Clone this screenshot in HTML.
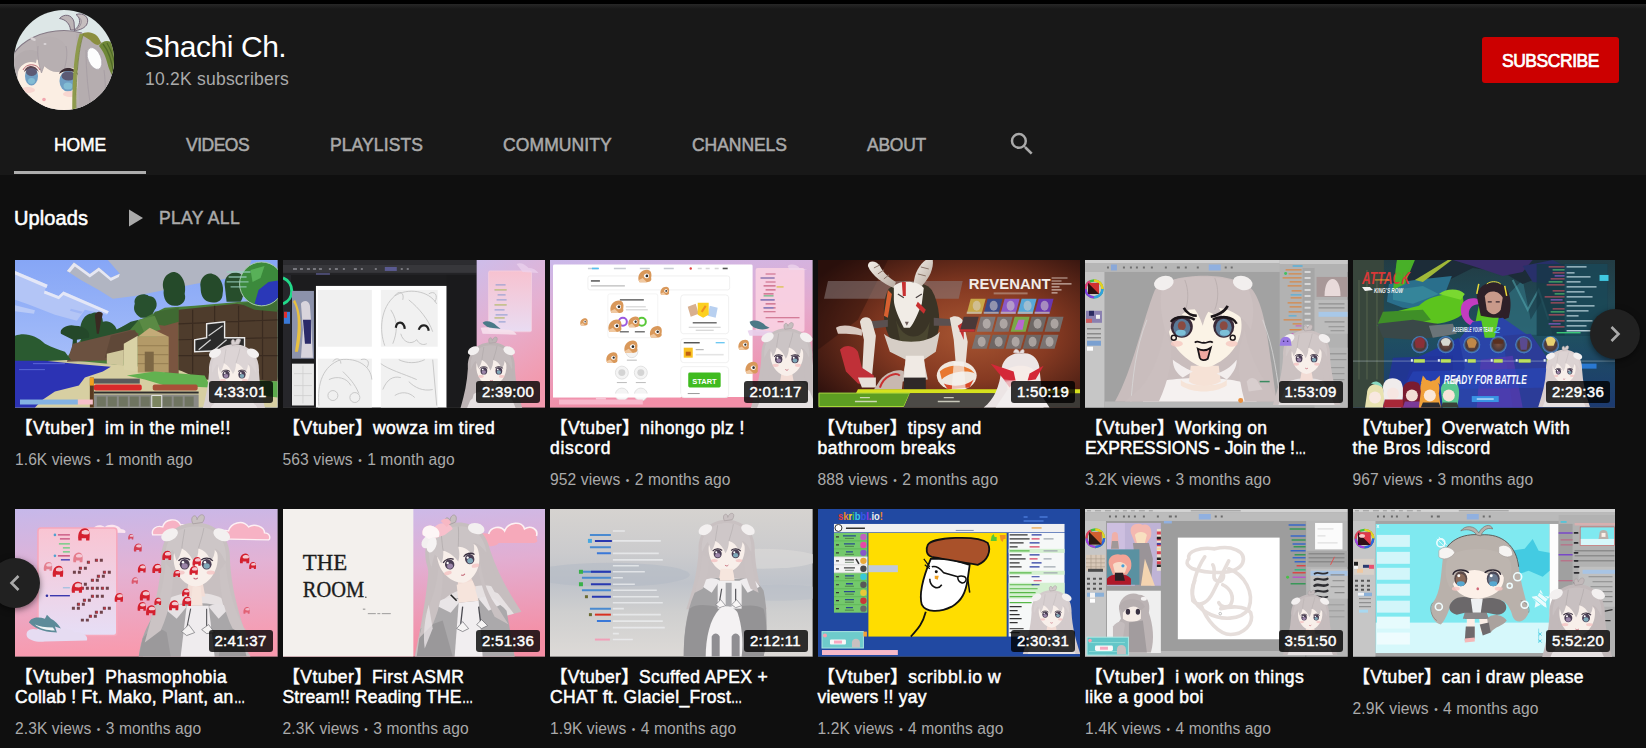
<!DOCTYPE html>
<html lang="en">
<head>
<meta charset="utf-8">
<title>Shachi Ch. - YouTube</title>
<style>
*{box-sizing:border-box;margin:0;padding:0}
html,body{width:1646px;height:748px;overflow:hidden;background:#0f0f0f;}
body{position:relative;font-family:"Liberation Sans","Noto Sans CJK JP",sans-serif;color:#fff;-webkit-font-smoothing:antialiased}
.abs{position:absolute}
#hdr{left:0;top:0;width:1646px;height:175px;background:#181818}
#topbar{left:0;top:0;width:1646px;height:4px;background:#000}
#topshadow{left:0;top:4px;width:1646px;height:5px;background:linear-gradient(#272727,#181818)}
#avatar{left:14px;top:10px;width:100px;height:100px;border-radius:50%;overflow:hidden}
#cname{left:144px;top:30px;font-size:30px;line-height:34px;white-space:nowrap;color:#fff;letter-spacing:-.45px}
#subs{left:145px;top:68px;font-size:17.5px;line-height:22px;white-space:nowrap;color:#aaa;letter-spacing:.23px}
#subbtn{left:1482px;top:37px;width:137px;height:46px;background:#cc0000;border-radius:3px;color:#fff;font-size:17.5px;text-align:center;line-height:48px;letter-spacing:-.45px;-webkit-text-stroke:.7px #fff}
.tab{top:134px;height:22px;line-height:22px;font-size:17.5px;color:#aaa;white-space:nowrap;-webkit-text-stroke:.5px currentColor}
.tab.sel{color:#fff}
#tabline{left:14px;top:171px;width:132px;height:3px;background:#adadad}
#uploads{left:14px;top:206px;font-size:20px;line-height:24px;white-space:nowrap;-webkit-text-stroke:.55px #fff;letter-spacing:.1px}
#playall{left:159px;top:207px;font-size:17.5px;line-height:22px;color:#aaa;white-space:nowrap;letter-spacing:.35px;-webkit-text-stroke:.5px #aaa}
.th{width:262.5px;height:147.5px;overflow:hidden;background:#444}
.th svg{display:block;width:262.5px;height:147.5px}
.dur{right:5px;bottom:5px;height:22px;width:64px;text-align:center;background:rgba(0,0,0,.8);border-radius:3px;font-size:15px;line-height:22px;color:#fff;letter-spacing:.3px;-webkit-text-stroke:.45px #fff}
.vt{width:262px;font-size:17.5px;line-height:20px;color:#fff;white-space:nowrap;-webkit-text-stroke:.5px #fff}
.vm{font-size:15.6px;line-height:20px;color:#aaa;white-space:nowrap}
.el{display:inline-block;width:11.2px;transform:scaleX(.64);transform-origin:0 50%;letter-spacing:0}
.bl{font-size:10px;vertical-align:1.5px;padding:0 .98px}
.nav{width:50px;height:50px;border-radius:50%;background:#212121;box-shadow:0 2px 6px rgba(0,0,0,.5)}
</style>
</head>
<body>
<svg width="0" height="0" style="position:absolute" aria-hidden="true">
<defs>
<g id="vtu">
<path d="M-25 28C-26 10 -14 0 0 0C14 0 26 10 25 28C26 46 30 62 36 80L-36 80C-30 62 -26 46 -25 28z" fill="currentColor"/>
<path d="M-2 1C-5 -5 1 -7 1 -2C3 -8 9 -6 5 0z" fill="currentColor" stroke="#a79ea0" stroke-width=".6"/>
<path d="M-20 56C-12 50 12 50 20 56L30 80L-30 80z" fill="#e6e1e2"/>
<path d="M-5 43L5 43L7 54L-7 54z" fill="#f3ddd6"/>
<path d="M-16 24C-16 14 16 14 16 24C17 36 9 46 0 47C-9 46 -17 36 -16 24z" fill="#f8efea"/>
<path d="M-22 30C-24 10 -12 3 0 3C12 3 24 10 22 30C20 24 17 20 14 19C14 23 13 26 11 28C9 23 6 20 2 19C2 23 1 27 -1 30C-3 25 -6 21 -10 19C-11 23 -12 26 -14 28C-15 24 -16 21 -17 20C-19 23 -21 26 -22 30z" fill="currentColor"/>
<path d="M-22 30C-24 10 -12 3 0 3C12 3 24 10 22 30C20 24 17 20 14 19C14 23 13 26 11 28C9 23 6 20 2 19C2 23 1 27 -1 30C-3 25 -6 21 -10 19C-11 23 -12 26 -14 28C-15 24 -16 21 -17 20C-19 23 -21 26 -22 30z" fill="#fff" opacity=".1"/>
<path d="M-8 5C-9 12 -10 16 -10 19M6 4C5 10 3 15 2 19" fill="none" stroke="#000" stroke-opacity=".1" stroke-width=".7"/>
<ellipse cx="-8" cy="30.500" rx="3.600" ry="3.900" fill="#4a3e54"/><ellipse cx="-8" cy="31.800" rx="2.300" ry="2" fill="#9a84a8"/><circle cx="-9.200" cy="29" r=".9" fill="#fff"/>
<ellipse cx="8" cy="30.500" rx="3.600" ry="3.900" fill="#4a3e54"/><ellipse cx="8" cy="31.800" rx="2.300" ry="2" fill="#7fa8b8"/><circle cx="6.800" cy="29" r=".9" fill="#fff"/>
<path d="M-12.500 28C-10.500 25.500 -6 25.500 -4 27.500M4 27.500C6 25.500 10.500 25.500 12.500 28" stroke="#3a3040" stroke-width="1" fill="none"/>
<ellipse cx="-11" cy="36.500" rx="3" ry="1.500" fill="#f4bcbc" opacity=".7"/><ellipse cx="11" cy="36.500" rx="3" ry="1.500" fill="#f4bcbc" opacity=".7"/>
<path d="M-1.500 40.500C-.5 41.500 .5 41.500 1.500 40.500" stroke="#c06070" stroke-width=".8" fill="none"/>
<ellipse cx="-19" cy="9" rx="6.500" ry="4.200" fill="#f3f0f0" transform="rotate(-28 -19 9)"/>
<ellipse cx="19" cy="9" rx="6.500" ry="4.200" fill="#f3f0f0" transform="rotate(28 19 9)"/>
<path d="M-22 28C-23 42 -24 54 -28 66L-20 60C-17 50 -17 38 -17 30z" fill="currentColor"/>
<path d="M22 28C23 42 24 54 28 66L20 60C17 50 17 38 17 30z" fill="currentColor"/>
</g>
</defs>
</svg>
<div id="hdr" class="abs"></div>
<div id="topshadow" class="abs"></div>
<div id="topbar" class="abs"></div>
<div id="avatar" class="abs"><svg width="100" height="100" viewBox="0 0 100 100">
<rect width="100" height="100" fill="#dde7e7"/>
<!-- ahoge -->
<path d="M45.500 8.500C50 3.500 58 4 60 12L60.500 20L56.500 20C56 14 52 9.500 45.500 8.500z" fill="#bcb4b6" stroke="#75697a" stroke-width="1"/>
<path d="M62 4.500C70 2 76.500 8 72.500 15C69.500 19 64 20.500 60 20.500C66 16 68 9 62 4.500z" fill="#c6bebf" stroke="#75697a" stroke-width="1"/>
<path d="M64 7C69 9 68 15 63 19" fill="none" stroke="#8a7e8c" stroke-width=".7"/>
<!-- hair back -->
<path d="M-2 46C8 30 28 20.500 50 20.500C72 20.500 92 30 102 50L102 102L-2 102z" fill="#b9b1b3"/>
<path d="M-2 46C8 30 28 20.500 50 20.500C58 20.500 64 22 68 23" fill="none" stroke="#857a86" stroke-width="1.100"/>
<!-- face -->
<path d="M4 62C8 50 22 46 28 52C30 56 40 62 46 62C52 58 58 56 64 60L62 100L10 100C4 90 2 76 4 62z" fill="#fbeee3"/>
<!-- bangs -->
<path d="M22 30C34 24 46 26 52 36C54 44 52 54 50 60C44 64 36 62 30 56L27.500 63C24 54 22 42 22 30z" fill="#b7afb1"/>
<path d="M0 50C6 40 16 38 24 42L22 53C14 50 8 54 2 62z" fill="#b4acae"/>
<path d="M24 36C23 46 25 56 27.500 63L30 56" fill="none" stroke="#a39aa0" stroke-width=".7"/>
<path d="M52 36C54 44 52 54 50 60" fill="none" stroke="#a39aa0" stroke-width=".7"/>
<!-- highlights -->
<ellipse cx="19" cy="29" rx="3" ry="1.500" fill="#d9d3d5" transform="rotate(25 19 29)"/>
<ellipse cx="31" cy="34" rx="1.500" ry="1" fill="#dcd6d8"/>
<!-- left eye -->
<ellipse cx="17.500" cy="66" rx="6.500" ry="9.500" fill="#6f9fc4"/>
<path d="M10 62C12 54 22 54 25 62C22 58 14 58 10 62z" fill="#5b4450"/>
<ellipse cx="17.500" cy="62" rx="5.500" ry="4" fill="#5c5a74"/>
<ellipse cx="17.500" cy="71" rx="3.500" ry="3" fill="#82bcd4"/>
<path d="M9 60C12 53 23 53 26 60" fill="none" stroke="#a84858" stroke-width=".8"/>
<!-- right eye -->
<ellipse cx="54" cy="71" rx="8.500" ry="10.500" fill="#6f9fc4"/>
<path d="M45 64C48 56 62 56 64 65C60 60 50 60 45 64z" fill="#3b2c34"/>
<ellipse cx="54.500" cy="66" rx="7" ry="4.500" fill="#5c5a74"/>
<ellipse cx="54" cy="76" rx="4.500" ry="3.500" fill="#82bcd4"/>
<!-- blush -->
<ellipse cx="14" cy="80" rx="7" ry="3" fill="#f8cfcb" opacity=".8"/>
<ellipse cx="56" cy="84" rx="7" ry="3" fill="#f8cfcb" opacity=".8"/>
<ellipse cx="30" cy="89.500" rx="1.800" ry="1.800" fill="#f2a8b0"/>
<!-- right side hair -->
<path d="M62 24C76 23 92 33 102 50L102 102L66 102C64 84 64 60 62 24z" fill="#b5adaf"/>
<path d="M72 40C72 60 74 84 78 102M90 60C92 76 92 90 90 102" fill="none" stroke="#a59ca2" stroke-width=".8"/>
<!-- green leaf -->
<path d="M67 24.500C73 20 84 22 87 33C84 37 80 34 76 30z" fill="#8b8e3e"/>
<path d="M85 36C90 28 100 30 102 40L102 72C98 66 95 60 93 52C91 44 88 40 85 36z" fill="#6f8838"/>
<path d="M89 34C94 40 98 50 100 66M93 33C97 40 100 48 101 56" fill="none" stroke="#4f6a28" stroke-width="1.200"/>
<!-- green stem -->
<path d="M67.500 24C62 40 60 70 60 100" fill="none" stroke="#8e9a4c" stroke-width="3.600"/>
<path d="M69.500 24C64 40 62 70 62 100" fill="none" stroke="#6f7c38" stroke-width=".7"/>
<!-- white clip -->
<ellipse cx="80.500" cy="48.500" rx="6.500" ry="11.500" fill="#fdfdfd" stroke="#a8a2aa" stroke-width=".7" transform="rotate(-22 80.500 48.500)"/>
</svg></div>
<div id="cname" class="abs">Shachi Ch.</div>
<div id="subs" class="abs">10.2K subscribers</div>
<div id="subbtn" class="abs">SUBSCRIBE</div>

<div class="abs tab sel" style="left:54px;letter-spacing:-0.1px">HOME</div>
<div class="abs tab" style="left:186px;letter-spacing:-0.5px">VIDEOS</div>
<div class="abs tab" style="left:330px;letter-spacing:0.1px">PLAYLISTS</div>
<div class="abs tab" style="left:503px;letter-spacing:0.1px">COMMUNITY</div>
<div class="abs tab" style="left:692px;letter-spacing:-0.05px">CHANNELS</div>
<div class="abs tab" style="left:867px;letter-spacing:-0.25px">ABOUT</div>
<svg class="abs" style="left:1007px;top:129px" width="30" height="30" viewBox="0 0 24 24"><path fill="#aaa" d="M15.5 14h-.79l-.28-.27A6.47 6.47 0 0 0 16 9.5 6.5 6.5 0 1 0 9.500 16c1.610 0 3.090-.59 4.230-1.570l.27.280v.79l5 4.990L20.490 19l-4.990-5zm-6 0C7.010 14 5 11.990 5 9.500S7.010 5 9.500 5 14 7.010 14 9.500 11.990 14 9.500 14z"/></svg>
<div id="tabline" class="abs"></div>

<div id="uploads" class="abs">Uploads</div>
<svg class="abs" style="left:128px;top:209px" width="16" height="18" viewBox="0 0 16 18"><path fill="#aaa" d="M1 0.500L15 9L1 17.500z"/></svg>
<div id="playall" class="abs">PLAY ALL</div>

<!-- ROW 1 -->
<div class="abs th" style="left:15px;top:260px" id="t1"><svg viewBox="0 0 263 148" preserveAspectRatio="none">
<defs><linearGradient id="sky1" x1="0" y1="0" x2="0" y2="1"><stop offset="0" stop-color="#86a6f6"/><stop offset=".7" stop-color="#a6bef9"/><stop offset="1" stop-color="#b8ccfa"/></linearGradient></defs>
<rect width="263" height="148" fill="url(#sky1)"/>
<!-- clouds -->
<path d="M93 0L237 0L232 14L205 20L180 24L150 30L120 36L98 39L84 30L66 20L52 11L59 2.500L75 14L84 7.400L96 17.800L105 13.900z" fill="#b1b5c2"/>
<path d="M52 11L59 2.500L75 14L84 7.400L96 17.800L105 13.900L104 17L96 21L84 11L75 17.500L60 6.500L55 12.500z" fill="#e6e7f2"/>
<path d="M0 11L32.700 24.800L29.700 30.700L43.600 36L48.500 31.700L94 51.500L92 55L70 50L62 61L40 55L13 44.500L0 40z" fill="#b3c5f6"/>
<path d="M0 11L32.700 24.800L31.500 28L0 14.500zM29.700 30.700L43.600 36L48.500 31.700L94 51.500L92.500 54L48.500 35L44 39.500L29 33.500z" fill="#e4e7f7"/>
<path d="M0 45.500L20 50.500L19 54L0 51.500z" fill="#b9caf7"/>
<path d="M56 49L68 52L66 54L55 51z" fill="#9fb6f5"/>
<!-- far trees on hill -->
<path d="M120 44C118 36 128 32 134 36C142 36 144 46 140 50L136 58L126 58C120 54 118 50 120 44z" fill="#28502e"/>
<path d="M149 30C146 20 152 12 160 12C168 14 172 24 170 34C172 40 168 46 160 46C152 46 148 38 149 30z" fill="#254a2a"/>
<path d="M186 28C184 18 192 12 198 14C206 16 210 26 208 34C208 42 200 44 194 42C188 40 186 34 186 28z" fill="#254a2a"/>
<path d="M210 24C210 14 220 10 226 14C232 20 230 36 226 42L212 42z" fill="#274e2c"/>
<!-- sand -->
<path d="M40 102L110 100L124 104L164 108L190 114L263 118L263 148L20 148z" fill="#d7cfa2"/>
<path d="M34 100L108 100L108 105L36 105z" fill="#c9c59c"/>
<!-- hill grass & dirt -->
<path d="M263 40L226 42L180 46L150 48L130 58L110 66L92 74L66 80L50 100L263 120z" fill="#4a7d3a"/>
<path d="M66 72C64 64 70 54 76 54C84 50 88 56 88 62C94 60 100 64 102 70L116 62L124 60L112 74L66 84z" fill="#28522e"/>
<path d="M46 74C44 68 54 64 60 66C70 66 76 72 74 78L62 80L62 100L56 100L58 80z" fill="#24482a"/>
<path d="M80 56C80 52 86 50 88 54L86 62L84 74L82 74z" fill="#3a2a22"/>
<path d="M58 84L116 70L124 74L110 100L52 102z" fill="#6b5140"/>
<path d="M136 66L164 62L164 118L150 114L144 80z" fill="#7a5540"/>
<path d="M96 76L120 70L128 84L110 96L90 98z" fill="#5c4636" opacity=".8"/>
<path d="M140 52L164 48L164 62L150 66L136 64z" fill="#3f6a32"/>
<path d="M124 60L140 56L146 70L130 74z" fill="#5a8a44"/>
<!-- dark plank wall -->
<path d="M164 50L222 44L263 50L263 122L186 120L164 110z" fill="#4e3c2c"/>
<path d="M164 64L263 60M164 80L263 78M164 96L263 96M178 50L178 114M200 46L200 118M224 46L224 120M248 48L248 120" stroke="#3a2b20" stroke-width="1.200" fill="none"/>
<path d="M192 64L210 62L210 78L224 78L230 78L230 90L180 92L180 80L192 78z" fill="#2a2a2a"/>
<path d="M192 64L210 62L210 78L230 78L230 90L180 92L180 80L192 78z" fill="none" stroke="#e8e8e8" stroke-width="1.400"/>
<path d="M194 76L208 66M184 90L196 80M200 90L212 80M214 90L226 80" stroke="#d0d0d0" stroke-width="1.200"/>
<path d="M226 44L263 38L263 52L240 50z" fill="#3f6e34"/>
<!-- house -->
<path d="M109 84L123 76L123 112L109 110z" fill="#d9d2a6"/>
<path d="M92 94L109 90L109 106L92 104z" fill="#cfc79c"/>
<rect x="123" y="77" width="31" height="36" fill="#b39a68"/>
<path d="M123 86L154 86M123 95L154 95M123 104L154 104" stroke="#8e774c" stroke-width=".8"/>
<rect x="130" y="92" width="9" height="20" fill="#7d6744"/>
<path d="M123 77L135 68L154 77z" fill="#c3ab78"/>
<!-- left forest -->
<path d="M0 76C10 72 22 76 30 84C38 88 44 90 50 92L56 100L0 103z" fill="#2a5a30"/>
<!-- grass patch -->
<path d="M112 116L140 112L190 116L196 128L150 126L130 120z" fill="#62b150"/>
<path d="M196 118L263 122L263 138L200 130z" fill="#5caa4c"/>
<!-- water -->
<path d="M0 101L30 101L60 104L96 107L88 112L70 118L64 126L40 132L28 140L20 148L0 148z" fill="#2c33b4"/>
<path d="M18 104L50 104M4 110L30 110" stroke="#5a66d8" stroke-width="1"/>
<!-- minimap -->
<circle cx="247" cy="24" r="22" fill="#3c8a3c"/>
<path d="M247 46A22 22 0 0 0 268 20L254 22L244 30L240 44z" fill="#2a38b8"/>
<path d="M236 10L250 6L246 18L238 22z" fill="#58b058"/>
<circle cx="247" cy="24" r="22" fill="none" stroke="#a8c8b0" stroke-width="1"/>
<path d="M212 12L236 12M214 17L232 17M212 22L234 22M216 27L232 27" stroke="#9ad0c0" stroke-width="1.400" opacity=".8"/>
<!-- hud -->
<rect x="79" y="135" width="105" height="13" fill="#8a8a86"/>
<path d="M82 137h9v10h-9zM93 137h9v10h-9zM104 137h9v10h-9zM115 137h9v10h-9zM126 137h9v10h-9zM148 137h9v10h-9zM159 137h9v10h-9zM170 137h9v10h-9z" fill="#6f7460"/>
<rect x="137" y="136" width="10" height="12" fill="#7c8560" stroke="#e4e4e4" stroke-width="1"/>
<rect x="79" y="125" width="48" height="6" rx="2" fill="#d82a2a"/>
<rect x="79" y="119" width="46" height="5" fill="#5a5a5a"/>
<rect x="138" y="125" width="45" height="6" rx="2" fill="#a85038"/>
<rect x="79" y="132" width="105" height="2" fill="#2e2e2e"/>
<rect x="75" y="118" width="4" height="30" fill="#5a3a20"/>
<rect x="75" y="118" width="4" height="8" fill="#f0a020"/>
<rect x="5" y="140" width="58" height="5" fill="#84b2e2"/>
<rect x="63" y="140" width="15" height="5" fill="#f6c0ca"/>
<!-- vtuber -->
<path d="M204 92C208 88 212 92 212 100L208 132L202 134C200 120 200 104 204 92z" fill="#262224"/>
<use href="#vtu" transform="translate(219.4 84.5) scale(1)" color="#d8d0d1"/>
</svg><div class="abs dur">4:33:01</div></div>

<div class="abs th" style="left:282.500px;top:260px" id="t2"><svg viewBox="0 0 263 148" preserveAspectRatio="none">
<defs><linearGradient id="cb2" x1="0" y1="0" x2="0" y2="1"><stop offset="0" stop-color="#f7c2d0"/><stop offset="1" stop-color="#e9dcf2"/></linearGradient><linearGradient id="pk2" x1="0" y1="0" x2="0.300" y2="1"><stop offset="0" stop-color="#cdbdea"/><stop offset=".5" stop-color="#e6b0d0"/><stop offset="1" stop-color="#f29aae"/></linearGradient></defs>
<rect width="263" height="148" fill="#1c1c1e"/>
<rect width="194" height="5" fill="#2c2c30"/>
<rect y="5" width="194" height="8" fill="#37373b"/>
<rect y="13" width="194" height="2" fill="#232326"/>
<rect x="102" y="7" width="12" height="4" fill="#5a5a90"/>
<path d="M10 9h4M17 9h3M24 9h3M30 9h3M36 9h3M46 9h2M52 9h3M60 9h2M71 9h3M78 9h2M92 9h2M118 9h2M124 9h2" stroke="#77777d" stroke-width="2"/>
<rect x="33" y="13" width="14" height="2" fill="#4a4a70"/>
<!-- left tool column -->
<rect x="0" y="15" width="8" height="133" fill="#26262a"/>
<path d="M0 18A14 14 0 0 1 0 44" fill="none" stroke="#22d98a" stroke-width="3"/>
<rect x="1" y="52" width="6" height="12" fill="#3a7ad8"/>
<rect x="1" y="52" width="3" height="6" fill="#e03030"/>
<!-- reference img -->
<rect x="9" y="31" width="22" height="68" fill="#8c92ab"/>
<path d="M18 44C20 40 26 40 27 46L28 60L30 98L18 98L20 70z" fill="#d8d4dc"/>
<path d="M20 60L28 60L28 84L22 84z" fill="#2a2a68"/>
<path d="M10 42C16 50 16 70 12 92L15 92C20 70 18 52 12 40z" fill="#e8c040"/>
<rect x="9" y="104" width="22" height="42" fill="#e9e9e9"/>
<path d="M11 114h18M11 126h18M11 136h18M20 106v38" stroke="#cfcfcf" stroke-width=".8"/>
<!-- canvas -->
<rect x="33" y="26" width="131" height="122" fill="#fff"/>
<rect x="35" y="30" width="54" height="57" fill="#f0f0f0"/>
<rect x="98" y="30" width="57" height="57" fill="#f1f1f1"/>
<rect x="35" y="99" width="54" height="49" fill="#f0f0f0"/>
<rect x="98" y="99" width="57" height="49" fill="#f1f1f1"/>
<g fill="none" stroke="#c4c4c4" stroke-width=".9">
<path d="M102 86C96 70 98 48 112 36C124 28 146 30 154 44M112 36C116 30 122 32 120 40M146 34C152 30 156 36 152 42M108 50C116 62 114 74 110 84M126 40C136 48 146 60 150 72M118 74C120 82 128 86 134 80C136 84 140 86 144 84"/>
<path d="M36 146C34 124 40 106 58 100C74 98 88 106 89 120M50 102C52 98 58 98 58 104M78 100C84 98 88 102 84 108M46 120C54 116 64 118 68 126M60 112C66 118 72 124 76 134"/>
<path d="M98 104C106 110 120 114 134 120M116 100C124 104 134 104 142 100M100 130C104 120 110 116 118 118M126 122C132 128 140 132 150 130M112 136C118 132 126 132 132 138M150 100L154 146"/>
<circle cx="50" cy="136" r="5"/><circle cx="72" cy="138" r="5"/>
</g>
<path d="M113 68C114 61 121 61 122 69" fill="none" stroke="#222" stroke-width="2.200"/>
<path d="M136 70C138 64 145 64 146 71" fill="none" stroke="#222" stroke-width="2.200"/>
<rect x="164" y="15" width="30" height="133" fill="#1a1a1c"/>
<!-- right panel -->
<rect x="194" y="0" width="69" height="148" fill="url(#pk2)"/>
<rect x="206" y="11" width="43" height="61" rx="1.500" fill="url(#cb2)" stroke="#f4cfe0" stroke-width=".8"/>
<path d="M213 25h10M212 30h12M215 35h8M214 40h10M212 45h12M212 50h10M213 55h12M212 58h10M216 62h7" stroke="#8a9ad0" stroke-width="1.300" opacity=".8"/>
<path d="M212 30h12M212 45h12M212 58h10" stroke="#d8d060" stroke-width="1.300" opacity=".8"/>
<path d="M234 4C238 2 242 4 246 8C250 8 254 10 256 13L240 12z" fill="#ecd3ee" opacity=".7"/>
<path d="M200 63C204 60 210 62 214 66L218 69L212 69C208 69 203 67 200 63z" fill="#4a7a88"/>
<path d="M198 68C206 66 216 70 226 70C230 70 234 74 234 75L200 74z" fill="#f6e0ec" opacity=".9"/>
<!-- vtuber -->
<use href="#vtu" transform="translate(208.75 82.6) scale(0.94)" color="#bdb4b5"/>
</svg><div class="abs dur">2:39:00</div></div>

<div class="abs th" style="left:550px;top:260px" id="t3"><svg viewBox="0 0 263 148" preserveAspectRatio="none">
<defs><linearGradient id="pk3" x1="0" y1="0" x2="0.200" y2="1"><stop offset="0" stop-color="#cbb9ea"/><stop offset=".5" stop-color="#e5a9cc"/><stop offset="1" stop-color="#f28fa8"/></linearGradient>
<g id="em3"><path d="M-6 4C-7 -2 -3 -6 2 -6C6 -6 7 -2 6 2C7 4 5 6 2 6L-5 6z" fill="#d9985a"/><path d="M-1 0C0 -3 4 -3 4 0C4 3 0 3 -1 0z" fill="#fff"/><circle cx="2" cy="0" r="1.300" fill="#2a2a2a"/><path d="M-6 4L-2 2L2 6L-5 6z" fill="#f0c8a0"/></g></defs>
<rect width="263" height="148" fill="url(#pk3)"/>
<rect x="3" y="4.400" width="200" height="133" rx="1.500" fill="#fff"/>
<path d="M38 8.500h10M64 8.500h12M90 8.500h10M114 8.500h10" stroke="#c8ccd4" stroke-width="1.600"/>
<path d="M42 8.500h7" stroke="#58c0f0" stroke-width="1.600"/>
<circle cx="141" cy="8.500" r="1.200" fill="#e04040"/><path d="M148 8.500h4M156 8.500h4M165 8.500h4" stroke="#d8d8d8" stroke-width="1.600"/><path d="M173 8.500h5" stroke="#555" stroke-width="1.600"/>
<rect x="38" y="16" width="142" height="14" rx="2" fill="#fff" stroke="#ececec" stroke-width=".8"/>
<path d="M41 21h9" stroke="#555" stroke-width="1.500"/><path d="M41 26h34" stroke="#bbb" stroke-width="1.200"/>
<rect x="58" y="34" width="50" height="44" rx="2" fill="#fff" stroke="#f0f0f0" stroke-width=".8"/>
<path d="M70 40h24" stroke="#666" stroke-width="1.500"/><path d="M76 47h20M76 50h22" stroke="#ccc" stroke-width="1"/>
<path d="M70 72h9M85 72h10" stroke="#777" stroke-width="1.300"/>
<circle cx="73" cy="62" r="4" fill="none" stroke="#9a58e0" stroke-width="2"/>
<circle cx="92" cy="62" r="4" fill="none" stroke="#58c838" stroke-width="2"/>
<!-- right cards -->
<rect x="131" y="35" width="48" height="39" rx="3" fill="#fff" stroke="#eee" stroke-width=".9"/>
<path d="M138 47l8 -3l3 10l-8 3z" fill="#d8b090"/><path d="M160 46l8 2l-2 10l-8 -2z" fill="#b8d0f0"/>
<path d="M148 43h11v12l-5.500 3l-5.500 -3z" fill="#fcd020"/><path d="M152 52l4 -6" stroke="#f09020" stroke-width="2"/>
<path d="M143 63h24" stroke="#666" stroke-width="1.400"/><path d="M139 67.500h32M146 70.500h18" stroke="#ccc" stroke-width="1"/>
<rect x="131" y="79" width="48" height="24" rx="3" fill="#fff" stroke="#eee" stroke-width=".9"/>
<path d="M134 83h16" stroke="#555" stroke-width="1.500"/><path d="M166 83h9" stroke="#58c0f0" stroke-width="1.200"/>
<rect x="134" y="88" width="9" height="10" fill="#f8c020"/><rect x="136" y="92" width="5" height="4" fill="#c06010"/>
<path d="M146 90h8" stroke="#aaa" stroke-width="1"/><path d="M146 95h28" stroke="#e4e4e4" stroke-width="1.600"/>
<rect x="131" y="107" width="48" height="31" rx="3" fill="#fff" stroke="#eee" stroke-width=".9"/>
<rect x="138.500" y="113" width="32.500" height="15" rx="1.500" fill="#3fbb1f"/>
<text x="154.800" y="124" font-family="Liberation Sans,sans-serif" font-weight="bold" font-size="7.500" fill="#fff" text-anchor="middle">START</text>
<path d="M138 134h12" stroke="#999" stroke-width="1"/>
<!-- lesson circles -->
<g fill="#f4f4f4" stroke="#dcdcdc" stroke-width=".8"><circle cx="72" cy="113" r="6.500"/><circle cx="91" cy="113" r="6.500"/><circle cx="72" cy="135" r="6.500"/><circle cx="91" cy="135" r="6.500"/><circle cx="82" cy="92" r="6"/></g>
<g fill="#d4d4d4"><circle cx="72" cy="113" r="3.500"/><circle cx="91" cy="113" r="3.500"/></g>
<path d="M67 123h10M86 123h10M77 100.500h10" stroke="#bbb" stroke-width="1"/>
<rect x="3" y="134" width="128" height="4" fill="#fff"/>
<!-- emotes -->
<use href="#em3" transform="translate(95 16) scale(1.050)"/>
<use href="#em3" transform="translate(115 31) scale(.7)"/>
<use href="#em3" transform="translate(67 47) scale(1.050)"/>
<use href="#em3" transform="translate(34 62) scale(.6)"/>
<use href="#em3" transform="translate(65 66) scale(1.050)"/>
<use href="#em3" transform="translate(84 62) scale(.9)"/>
<use href="#em3" transform="translate(106 72) scale(.95)"/>
<use href="#em3" transform="translate(81 87) scale(1.050)"/>
<use href="#em3" transform="translate(62 98) scale(.9)"/>
<use href="#em3" transform="translate(194 85) scale(.85)"/>
<use href="#em3" transform="translate(202 108) scale(1)"/>
<!-- chat panel -->
<rect x="206" y="8" width="49" height="64" rx="2" fill="#f9d3e2" opacity=".9"/>
<path d="M216 14h10M211 18h14M216 22h10M214 26h12M216 30h10M214 34h10M211 40h14M216 44h10M214 48h12M214 52h12M216 58h34M228 62h6" stroke="#c05070" stroke-width="1.100" opacity=".85"/>
<path d="M211 18h14M211 40h14M214 48h10" stroke="#7080c8" stroke-width="1.100"/>
<path d="M227 27h7" stroke="#d8c040" stroke-width="1.200"/><path d="M214 36h10" stroke="#58b878" stroke-width="1.100"/>
<path d="M238 6C242 3 248 5 250 8L258 10L240 10z" fill="#f0d8ee" opacity=".7"/>
<!-- orca -->
<path d="M200 62C205 59 212 61 216 66L220 68C216 70 212 70 208 69C204 68 201 66 200 62z" fill="#4c7886"/>
<path d="M198 71C206 68 218 72 228 72L232 76L200 76z" fill="#e8d0ec" opacity=".9"/>
<!-- vtuber -->
<use href="#vtu" transform="translate(237.3 68.5) scale(1.02)" color="#c6bebf"/>
<!-- bottom bar -->
<rect x="9" y="140" width="84" height="5" fill="#f8b8cc"/>
<rect x="46" y="138.500" width="10" height="1.500" fill="#f8c8d8"/>
</svg><div class="abs dur">2:01:17</div></div>

<div class="abs th" style="left:817.500px;top:260px" id="t4"><svg viewBox="0 0 263 148" preserveAspectRatio="none">
<defs><radialGradient id="bg4" cx=".58" cy=".5" r=".7"><stop offset="0" stop-color="#a85632"/><stop offset=".45" stop-color="#863a22"/><stop offset="1" stop-color="#2e110d"/></radialGradient>
<linearGradient id="sk4" x1="0" y1="0" x2="1" y2="1"><stop offset="0" stop-color="#f4efe8"/><stop offset="1" stop-color="#b8aaa0"/></linearGradient></defs>
<rect width="263" height="148" fill="url(#bg4)"/>
<path d="M0 0L70 0L40 60L0 90z" fill="#200c0a" opacity=".35"/>
<path d="M10 21L145 21L141 39L6 39z" fill="#8a7c7c" opacity=".55"/>
<!-- fur -->
<path d="M70 30C76 22 104 18 114 30C122 44 124 66 118 80C110 92 84 92 74 82C64 66 64 44 70 30z" fill="#3a3426"/>
<path d="M78 60C84 80 104 84 112 62L108 88L84 90z" fill="#4a4630"/>
<!-- horns -->
<path d="M76 28C66 24 54 16 50 6C50 0 58 0 62 6C66 14 72 18 78 22z" fill="url(#sk4)"/>
<path d="M96 24C96 14 102 4 108 0L115 0C116 8 112 18 104 26z" fill="url(#sk4)"/>
<path d="M56 8L62 5M60 14L66 10M66 19L71 15M100 14L108 16M103 7L111 9" stroke="#8a7468" stroke-width="1"/>
<!-- skull -->
<path d="M76 26C82 20 100 20 106 28L104 44C100 54 96 64 92 68L86 68C82 60 76 48 76 40z" fill="#f1ece6"/>
<path d="M84 22L88 22L88 36L85 36z" fill="#c83030"/>
<path d="M100 42L108 50L106 54L98 46z" fill="#c83030"/>
<path d="M80 34L86 38M98 38L104 34" stroke="#4a4040" stroke-width="1.200"/>
<path d="M87 62L91 62L89 66z" fill="#6a5a58"/>
<path d="M70 30L66 56L70 58L74 34z" fill="#d86030"/>
<!-- shoulders bar -->
<path d="M46 62L70 60L70 67L46 70z" fill="#5a5050"/>
<path d="M116 58L140 60L140 66L116 66z" fill="#5a5050"/>
<!-- left arm -->
<path d="M42 62C44 56 52 56 54 62L58 76L54 118L44 118L46 80z" fill="#e6ded6"/>
<path d="M18 68C24 64 36 66 44 70L44 76C36 74 26 74 20 74z" fill="#d8c8c0"/>
<path d="M22 90C28 84 36 86 40 92L44 108L56 116L56 126L40 124L28 112z" fill="#c03038"/>
<path d="M40 118L58 118L58 128L44 128z" fill="#e8e0d8"/>
<!-- right arm -->
<path d="M132 58C138 54 146 58 146 64L150 82L148 104L138 104L136 80z" fill="#e8e0d8"/>
<path d="M140 66L146 62L146 80z" fill="#c83030"/>
<!-- torso -->
<path d="M66 74C76 84 110 86 122 72L118 92L106 100L110 120L84 122L88 100L72 92z" fill="#d6cec6"/>
<path d="M88 96L106 96L108 118L86 120z" fill="#f0eae4"/>
<path d="M60 124C66 112 82 108 86 112L84 130L56 130z" fill="#c8b8b0"/>
<path d="M62 128C66 116 78 112 82 116" fill="none" stroke="#c83030" stroke-width="2"/>
<rect x="86" y="118" width="22" height="12" fill="#2e2828"/>
<!-- orb -->
<ellipse cx="139" cy="116" rx="20" ry="15" fill="#efe7df"/>
<path d="M122 112C130 104 150 104 157 114C150 110 132 112 124 120z" fill="#e87830"/>
<path d="M126 124C136 128 150 126 156 120L152 128L130 130z" fill="#d84828"/>
<path d="M136 102L146 102L148 130L134 130z" fill="#f6f2ee" opacity=".7"/>
<!-- title -->
<text x="151" y="29.300" font-family="Liberation Sans,sans-serif" font-weight="bold" font-size="15.400" fill="#f2ece8" textLength="82" lengthAdjust="spacingAndGlyphs">REVENANT</text>
<rect x="176" y="32.500" width="34" height="2" fill="#b08878" opacity=".8"/>
<path d="M234 18h16M234 21h10M234 24h20M234 27h8M234 30h10M234 33h6" stroke="#e8d8d0" stroke-width="1.100" opacity=".8"/>
<!-- grid -->
<g>
<path d="M153 39L168 39L164 54L149 54z" fill="#c8a848"/><path d="M170 39L185 39L181 54L166 54z" fill="#3a4a88"/><path d="M187 39L202 39L198 54L183 54z" fill="#8a58c8"/><path d="M204 39L219 39L215 54L200 54z" fill="#58a8d8"/><path d="M221 39L236 39L232 54L217 54z" fill="#6a38b0"/>
<path d="M146 57L161 57L157 72L142 72z" fill="#4a3838"/>
<path d="M163 57L178 57L174 72L159 72z" fill="#807878"/><path d="M180 57L195 57L191 72L176 72z" fill="#7a7272"/><path d="M197 57L212 57L208 72L193 72z" fill="#7aa848"/><path d="M214 57L229 57L225 72L210 72z" fill="#6e6866"/><path d="M231 57L246 57L242 72L227 72z" fill="#746e6c"/>
<path d="M158 75L173 75L169 89L154 89z" fill="#7a7270"/><path d="M175 75L190 75L186 89L171 89z" fill="#6e6664"/><path d="M192 75L207 75L203 89L188 89z" fill="#7a7270"/><path d="M209 75L224 75L220 89L205 89z" fill="#6e6664"/><path d="M226 75L241 75L237 89L222 89z" fill="#7a7270"/>
<path d="M201 60L207 60L205 70L197 70z" fill="#b868d0"/>
<path d="M149 52L164 52L163.500 54L149 54zM166 52L181 52L181 54L166 54zM183 52L198 52L198 54L183 54zM200 52L215 52L215 54L200 54zM217 52L232 52L232 54L217 54z" fill="#c8b8b0" opacity=".8"/>
<path d="M142 69.500L157 69.500L157 72L142 72z" fill="#c83030"/>
<g fill="#d8d0cc" opacity=".55"><ellipse cx="159" cy="46" rx="4" ry="5"/><ellipse cx="176" cy="46" rx="4" ry="5"/><ellipse cx="193" cy="46" rx="4" ry="5"/><ellipse cx="210" cy="46" rx="4" ry="5"/><ellipse cx="227" cy="46" rx="4" ry="5"/><ellipse cx="169" cy="64" rx="4" ry="5"/><ellipse cx="186" cy="64" rx="4" ry="5"/><ellipse cx="220" cy="64" rx="4" ry="5"/><ellipse cx="237" cy="64" rx="4" ry="5"/><ellipse cx="164" cy="82" rx="4" ry="5"/><ellipse cx="181" cy="82" rx="4" ry="5"/><ellipse cx="198" cy="82" rx="4" ry="5"/><ellipse cx="215" cy="82" rx="4" ry="5"/><ellipse cx="232" cy="82" rx="4" ry="5"/></g>
</g>
<!-- bottom bar -->
<rect x="0" y="133" width="263" height="15" fill="#3c3a36"/>
<path d="M40 129.600L263 129.600L263 133.600L38 133.600z" fill="#d6e21e"/>
<path d="M1 133.600L92 133.600L86 147L1 147z" fill="#5d9d22"/>
<path d="M1 133.600L92 133.600L86 147L1 147z" fill="none" stroke="#a6d838" stroke-width="1"/>
<path d="M92 133.600L176 133.600L176 148L86 148z" fill="#4c4a46"/>
<path d="M42 138h10M37 142h22M126 138h10M120 142h22" stroke="#e8e8d8" stroke-width="1.300" opacity=".8"/>
<!-- vtuber -->
<path d="M184 108C186 98 196 92 204 94C214 92 222 100 222 110L226 148L166 148C176 140 182 128 184 108z" fill="#ece5e5"/>
<path d="M196 93C196 89 200 88 202 93C204 88 208 89 206 94z" fill="#e8e0e0" stroke="#c8b8b8" stroke-width=".6"/>
<path d="M188 112C194 104 212 104 218 112L218 130L190 130z" fill="#f6ece8"/>
<path d="M173 104L196 112L198 121L188 122z" fill="#d42838"/>
<path d="M226 106L212 114L210 121L218 120z" fill="#d42838"/>
<path d="M186 120L198 121L192 128z" fill="#e8a0a8" opacity=".7"/>
<path d="M190 130L220 130L232 148L178 148z" fill="#f2eeee"/>
</svg><div class="abs dur">1:50:19</div></div>

<div class="abs th" style="left:1085px;top:260px" id="t5"><svg viewBox="0 0 263 148" preserveAspectRatio="none">
<rect width="263" height="148" fill="#a2a2a2"/>
<rect width="263" height="3.500" fill="#d0d0d0"/>
<rect y="3.500" width="263" height="8.500" fill="#b6b6b6"/>
<rect x="26" y="4.500" width="6" height="6" fill="#8aa8d8"/>
<rect x="124" y="4.500" width="12" height="6" fill="#90b0e0"/>
<path d="M22 7.500h2M38 7.500h2M45 7.500h2M51 7.500h2M58 7.500h2M66 7.500h2M80 7.500h2M92 7.500h3M100 7.500h2M112 7.500h2M140 7.500h2M146 7.500h2" stroke="#707070" stroke-width="2"/>
<rect x="0" y="12" width="19.500" height="136" fill="#c6c6c6"/>
<rect x="19.500" y="142" width="176" height="6" fill="#b8b8b8"/>
<!-- color wheel -->
<circle cx="9" cy="29" r="8.500" fill="none" stroke="#40c040" stroke-width="2.400"/>
<path d="M9 20.500A8.500 8.500 0 0 1 17.500 29" fill="none" stroke="#e8d020" stroke-width="2.400"/>
<path d="M17.500 29A8.500 8.500 0 0 1 9 37.500" fill="none" stroke="#30a0e0" stroke-width="2.400"/>
<path d="M9 37.500A8.500 8.500 0 0 1 .5 29" fill="none" stroke="#8040e0" stroke-width="2.400"/>
<path d="M.5 29A8.500 8.500 0 0 1 5 21.500" fill="none" stroke="#e04080" stroke-width="2.400"/>
<rect x="3" y="23" width="11" height="11" fill="#8a2020"/><path d="M3 23L14 23L14 34z" fill="#d03030"/><path d="M3 23L3 34L14 34z" fill="#2a1010"/>
<rect x="1" y="51" width="16" height="12" fill="#8a80b0"/><rect x="4" y="51" width="5" height="5" fill="#2a2a60"/><rect x="11" y="55" width="4" height="4" fill="#f0f0f0"/><rect x="1" y="59" width="6" height="4" fill="#d06060"/>
<path d="M2 69h14M2 74h14M2 78h14" stroke="#8a8a8a" stroke-width="1.500"/>
<rect x="2" y="81" width="14" height="5" fill="#7aa0d0"/><rect x="2" y="87" width="6" height="4" fill="#fff"/>
<!-- big character: hair back -->
<path d="M70 30C84 12 150 10 168 30C182 50 184 90 192 142L30 142C48 110 58 60 70 30z" fill="#c9bdbd"/>
<path d="M62 60C50 90 48 120 46 142M178 60C190 90 192 118 196 140" fill="none" stroke="#d8d8d8" stroke-width=".8"/>
<!-- shirt -->
<path d="M64 126C80 116 150 116 166 126L172 142L58 142z" fill="#f5f1f0"/>
<path d="M96 120C100 128 138 128 142 120L142 126C130 134 108 134 96 126z" fill="#f6e4d8"/>
<!-- neck -->
<path d="M106 106L134 106L136 122C126 128 112 128 104 122z" fill="#f6e2d6"/>
<!-- face -->
<path d="M84 58C88 42 150 42 156 58C160 76 150 96 128 106C122 108 116 108 110 104C92 94 80 76 84 58z" fill="#fbf3e6"/>
<!-- bangs -->
<path d="M78 24C96 14 140 14 162 26C170 40 170 56 166 70C160 58 148 50 134 48C138 54 138 58 136 60C128 52 116 48 104 50C96 54 88 64 82 76C76 58 74 38 78 24z" fill="#cdc1c1"/>
<path d="M106 44C111 50 115 57 118 66C120 57 124 50 130 44z" fill="#cdc1c1"/>
<path d="M100 20C104 30 104 42 100 52M130 18C134 28 134 40 130 50" stroke="#b8acac" stroke-width=".8" fill="none"/>
<!-- side hair front -->
<path d="M80 70C76 90 70 112 56 128L40 142L74 142C84 120 88 100 86 84z" fill="#cbbfbf"/>
<path d="M160 70C164 92 172 112 184 126L194 142L160 142C154 120 152 100 156 84z" fill="#cbbfbf"/>
<path d="M88 100C96 106 104 110 108 112L98 118C92 114 88 108 88 100zM152 100C146 108 138 112 132 114L142 120C148 114 152 108 152 100z" fill="#f3eeee"/>
<!-- ears -->
<ellipse cx="79" cy="23" rx="10" ry="7" fill="#f2efee" transform="rotate(-15 79 23)"/>
<ellipse cx="158" cy="23" rx="10" ry="7" fill="#f2efee" transform="rotate(15 158 23)"/>
<!-- eyes -->
<ellipse cx="97" cy="67" rx="11" ry="11" fill="#3a2a38"/>
<ellipse cx="97" cy="68" rx="8.500" ry="9" fill="#5a7a98"/>
<ellipse cx="97" cy="66" rx="4" ry="4.500" fill="#8a4a40"/>
<ellipse cx="96" cy="73" rx="5" ry="3" fill="#7cc0d8"/>
<ellipse cx="139" cy="67" rx="10.500" ry="11" fill="#3a2a38"/>
<ellipse cx="139" cy="68" rx="8" ry="9" fill="#5a7a98"/>
<ellipse cx="139" cy="66" rx="4" ry="4.500" fill="#8a4a40"/>
<ellipse cx="140" cy="73" rx="5" ry="3" fill="#7cc0d8"/>
<path d="M86 62C90 56 104 56 110 60" stroke="#1a1418" stroke-width="2.400" fill="none"/>
<path d="M128 60C134 56 148 56 152 64" stroke="#1a1418" stroke-width="2.400" fill="none"/>
<path d="M99 48C102 54 108 56 112 56" stroke="#1a1418" stroke-width="2.600" fill="none"/>
<path d="M126 57C132 56 140 52 143 46" stroke="#1a1418" stroke-width="2.600" fill="none"/>
<circle cx="89" cy="78" r="2.500" fill="none" stroke="#1a1418" stroke-width="1.400"/>
<circle cx="148" cy="78" r="2.500" fill="none" stroke="#1a1418" stroke-width="1.400"/>
<ellipse cx="92" cy="84" rx="6" ry="3" fill="#f6c8c0" opacity=".8"/><ellipse cx="147" cy="84" rx="6" ry="3" fill="#f6c8c0" opacity=".8"/>
<!-- mouth -->
<path d="M110 83C113 80 116 84 119 83C122 84 125 80 128 83" stroke="#1a1418" stroke-width="1.800" fill="none"/>
<path d="M113 89C117 91 122 91 126 88L123 99C120 101 116 101 115 98z" fill="#f0a8a0" stroke="#1a1418" stroke-width="1.800"/>
<!-- right panel -->
<rect x="195" y="0" width="68" height="148" fill="#b2b2b2"/>
<rect x="195" y="0" width="68" height="4" fill="#c8c8c8"/>
<rect x="218" y="8" width="12" height="64" fill="#a6a6a6"/>
<path d="M220 12h6M220 18h6M220 24h6M220 30h6M220 36h6M220 42h6M220 48h6M220 54h6M220 60h6M220 66h6" stroke="#ececec" stroke-width="2" opacity=".7"/>
<rect x="232" y="17" width="31" height="20" fill="#a89898"/>
<path d="M240 36C240 24 244 19 248 19C253 19 256 26 256 36z" fill="#e8dada"/>
<rect x="230" y="40" width="33" height="34" fill="#bcbcbc"/>
<rect x="234" y="52" width="29" height="5" fill="#a8c8e8"/>
<path d="M234 44h26M234 48h26M240 62h20M244 67h16M246 71h14" stroke="#909090" stroke-width="1.200"/>
<rect x="230" y="88" width="33" height="60" fill="#b8b8b8"/>
<path d="M232 94h30M232 100h30M236 108h24M236 114h24M236 120h24" stroke="#9a9a9a" stroke-width="1.400"/>
<g stroke="#d88848" stroke-width="1.300"><path d="M201 10h16M204 14h13M198 18h19M205 22h12M203 26h14M207 31h10M206 38h11M203 43h14M205 47h12M204 52h13M199 60h18M208 64h9M205 70h12"/></g>
<g stroke="#58b0d8" stroke-width="1.300"><path d="M208 6h10M206 35h11M204 56h8"/></g>
<path d="M211 66h6M207 74h8" stroke="#c868c0" stroke-width="1.300"/>
<circle cx="201" cy="13.500" r="1.500" fill="#40c060"/>
<!-- small vtuber -->
<use href="#vtu" transform="translate(222 70.3) scale(0.94)" color="#cbc1c1"/>
<!-- emote -->
<path d="M196 80C198 76 204 76 206 80L207 86L195 86z" fill="#9a7ae4"/>
<circle cx="199" cy="81.500" r=".8" fill="#3a2a70"/><circle cx="203" cy="81.500" r=".8" fill="#3a2a70"/>
<path d="M162 122C166 116 172 118 174 124L178 130L164 132z" fill="#d8cece"/>
<path d="M175 122h10" stroke="#3a8a60" stroke-width="1.500"/>
<circle cx="156" cy="141" r="2.500" fill="#e89040"/>
</svg><div class="abs dur">1:53:09</div></div>

<div class="abs th" style="left:1352.500px;top:260px" id="t6"><svg viewBox="0 0 263 148" preserveAspectRatio="none">
<defs><linearGradient id="bg6" x1="0" y1="0" x2="0" y2="1"><stop offset="0" stop-color="#223c44"/><stop offset=".5" stop-color="#1f5060"/><stop offset="1" stop-color="#1c3a70"/></linearGradient>
<radialGradient id="pr6"><stop offset="0" stop-color="#7a5040"/><stop offset=".7" stop-color="#4a3838"/><stop offset="1" stop-color="#4890e0"/></radialGradient></defs>
<rect width="263" height="148" fill="url(#bg6)"/>
<!-- buildings -->
<rect x="0" y="0" width="31" height="148" fill="#38463c"/>
<path d="M6 20L6 120M14 10L14 120M24 20L24 120" stroke="#5a6850" stroke-width="1.500" opacity=".6"/>
<path d="M150 40L170 20L178 60L190 40L200 75L150 75z" fill="#2e6a78" opacity=".8"/>
<path d="M160 20L175 50L186 30L196 60" fill="none" stroke="#58b0b8" stroke-width="2" opacity=".5"/>
<!-- mech dark top -->
<path d="M60 0L200 0L196 14L170 24L150 12L120 8L96 20L70 30L50 26z" fill="#1c2c38"/>
<path d="M100 0L180 0L170 12L150 16L120 6z" fill="#3a2c6a"/>
<path d="M170 6L200 0L220 10L200 24L180 22z" fill="#28306a"/>
<path d="M36 24L62 20L99 16L92 34L78 50L50 48L34 42z" fill="#2a6f8c"/>
<path d="M40 30L70 26L86 34L60 44L40 40z" fill="#3a8fa0" opacity=".7"/>
<path d="M62 20L95 0L99 0L70 22z" fill="#a0b838"/>
<!-- green mech -->
<path d="M44 0L62 0L52 24L40 30z" fill="#48b028"/>
<path d="M66 46C76 36 96 32 110 36L112 52C104 62 84 66 66 64L40 60L34 54z" fill="#5cc41e"/>
<path d="M30 52L70 50L78 60L40 70L24 66z" fill="#3f8f28"/>
<path d="M86 34C94 28 106 28 112 34L108 40z" fill="#7ad830"/>
<path d="M126 46L140 50L146 64L134 74L122 66z" fill="#5cc41e"/>
<path d="M24 64L60 60L84 64L96 76L60 80L30 78z" fill="#3a4848"/>
<path d="M76 66L100 64L104 74L80 78z" fill="#6a7478"/>
<!-- magenta ring -->
<path d="M108 50C108 40 118 36 128 40L132 46C124 42 116 46 116 54C116 60 122 64 130 62L132 68C120 70 108 62 108 50z" fill="#c23cc0"/>
<!-- dva hair -->
<path d="M124 36C126 24 138 20 148 24C158 28 160 44 156 58L150 60L128 56z" fill="#2e2028"/>
<path d="M126 24L124 34M152 26L154 36" stroke="#e8d838" stroke-width="1.500"/>
<path d="M134 24C138 21 144 21 148 24" stroke="#e8d838" stroke-width="1" fill="none"/>
<!-- face -->
<path d="M132 36C136 30 146 30 150 38L148 50C144 56 138 56 134 50z" fill="#c99a8a"/>
<path d="M135 42h4M143 42h4" stroke="#3a2830" stroke-width="1.200"/>
<!-- body blue -->
<path d="M120 62L150 58L176 76L180 148L100 148L110 110L106 80z" fill="#2a44a8"/>
<path d="M128 58L146 58L142 78L132 78z" fill="#58c828"/>
<path d="M106 78L60 100L50 130L100 140L112 108z" fill="#2238a0"/>
<path d="M150 76L178 74L196 100L190 148L160 148z" fill="#2c3c98"/>
<path d="M128 100L160 96L170 148L124 148z" fill="#5a3ab0" opacity=".7"/>
<path d="M40 98L100 96L100 148L30 148z" fill="#22349a" opacity=".85"/>
<!-- chat panel -->
<rect x="184" y="4" width="71" height="72" fill="#163844" opacity=".75"/>
<rect x="212" y="4" width="43" height="72" fill="#1e5060" opacity=".6"/>
<g stroke-width="1.300" opacity=".9">
<path d="M196 7h16M200 13h12M198 19h14M194 25h18M200 31h12M192 37h20M198 43h14M200 49h12M196 55h16M200 61h12M198 67h14" stroke="#c05060"/>
<path d="M200 10h12M196 22h14M202 34h10M198 52h14" stroke="#50c070"/>
<path d="M202 16h10M198 40h12M196 64h12" stroke="#9060d0"/>
<path d="M214 7h20M214 13h8M214 17h24M214 22h14M214 27h30M214 32h18M214 37h26M214 42h10M214 46h28M214 51h22M214 56h12M214 61h26M214 66h20M214 71h28" stroke="#c8e0e8"/>
</g>
<rect x="247" y="15" width="9" height="6" fill="#40c8e0"/>
<path d="M204 73h24" stroke="#40e080" stroke-width="1.200"/>
<!-- top-left text -->
<text x="9" y="24" font-family="Liberation Sans,sans-serif" font-weight="bold" font-style="italic" font-size="17" fill="#d83838" textLength="48" lengthAdjust="spacingAndGlyphs">ATTACK</text>
<path d="M44 2L60 2L48 22L42 22z" fill="#48b028" opacity=".9"/>
<text x="21" y="33.500" font-family="Liberation Sans,sans-serif" font-weight="bold" font-style="italic" font-size="7.500" fill="#f0f0f0" textLength="29" lengthAdjust="spacingAndGlyphs">KING'S ROW</text>
<path d="M9 27l8 0l3 3l-8 1z" fill="#f0f0f0"/>
<path d="M22 20h14" stroke="#e8a030" stroke-width="1"/>
<text x="100" y="72.500" font-family="Liberation Sans,sans-serif" font-weight="bold" font-style="italic" font-size="7" fill="#e8f0f8" textLength="40" lengthAdjust="spacingAndGlyphs">ASSEMBLE YOUR TEAM</text>
<text x="142" y="73.500" font-family="Liberation Sans,sans-serif" font-weight="bold" font-style="italic" font-size="10" fill="#58b0f8">2</text>
<!-- portraits -->
<g>
<circle cx="67" cy="85" r="8.500" fill="url(#pr6)"/><circle cx="93" cy="85" r="8.500" fill="url(#pr6)"/><circle cx="119" cy="85" r="8.500" fill="url(#pr6)"/><circle cx="145.500" cy="85" r="8.500" fill="url(#pr6)"/><circle cx="171" cy="85" r="8.500" fill="url(#pr6)"/><circle cx="198" cy="85" r="8.500" fill="url(#pr6)"/>
<path d="M62 82C63 76 71 76 72 82L71 88L63 88z" fill="#8a3038"/><path d="M88 82C89 77 97 77 98 82L96 86L90 86z" fill="#d8d8d0"/><path d="M114 82C115 77 123 77 124 83L122 88L116 88z" fill="#c08848"/><path d="M140 80L151 80L150 84L141 84z" fill="#5a3020"/><path d="M167 80C168 77 174 77 175 81L174 90L168 90z" fill="#5a4a90"/><path d="M193 80C194 76 202 76 203 81L201 86L195 86z" fill="#e8d070"/>
</g>
<g fill="#b8e040"><rect x="61" y="99.500" width="11" height="3.500"/><rect x="88" y="99.500" width="10" height="3.500"/><rect x="115" y="99.500" width="8" height="3.500"/><rect x="141" y="99.500" width="9" height="3.500"/><rect x="166" y="99.500" width="12" height="3.500"/><rect x="194" y="99.500" width="8" height="3.500"/></g>
<g fill="#e8f0f8"><rect x="58" y="99.500" width="2" height="2.500"/><rect x="85" y="99.500" width="2" height="2.500"/><rect x="112" y="99.500" width="2" height="2.500"/><rect x="138" y="99.500" width="2" height="2.500"/><rect x="163" y="99.500" width="2" height="2.500"/><rect x="191" y="99.500" width="2" height="2.500"/></g>
<rect x="0" y="101" width="263" height=".8" fill="#d0e0e8" opacity=".5"/>
<!-- ready for battle -->
<path d="M60 112L200 108L196 128L50 130z" fill="#2848c0" opacity=".55"/>
<rect x="119" y="136.500" width="27" height="6" fill="#3a94e4"/>
<path d="M124 139.500h17" stroke="#d8ecff" stroke-width="1.200"/>
<rect x="226" y="104" width="18" height="5" fill="#2a78d0"/>
<!-- chibi girls -->
<g>
<path d="M14 134C14 126 22 122 28 126C32 130 32 140 30 148L12 148z" fill="#e8e2b0"/><path d="M18 124C22 120 28 122 30 128L26 126z" fill="#88d8c0"/><ellipse cx="22" cy="138" rx="6" ry="6" fill="#f8e8e0"/>
<path d="M30 128C30 118 42 116 48 122C52 130 50 140 48 148L32 148z" fill="#f0ecec"/><ellipse cx="40" cy="134" rx="6" ry="6" fill="#f6e6e2"/><path d="M32 140L50 140L52 148L30 148z" fill="#a82838"/>
<path d="M50 130C50 122 60 120 66 124C70 130 68 140 68 148L50 148z" fill="#7a1c30"/><ellipse cx="59" cy="136" rx="6" ry="6" fill="#f2dcd4"/><path d="M52 142L68 142L70 148L50 148z" fill="#7a3a98"/>
<path d="M68 132C66 122 72 118 78 122C84 118 88 124 86 134L88 148L66 148z" fill="#f0a038"/><path d="M68 124L70 116L75 122zM82 121L87 116L87 125z" fill="#f0a038"/><ellipse cx="77" cy="136" rx="6" ry="6" fill="#fbe8d8"/><path d="M70 143L86 143L88 148L68 148z" fill="#2a2a30"/>
<path d="M88 130C88 122 98 118 104 124C108 130 106 140 104 148L90 148z" fill="#58c890"/><path d="M98 120L106 118L104 126z" fill="#d8d8d0"/><ellipse cx="96" cy="136" rx="6" ry="6" fill="#f8e4d8"/><path d="M90 143L104 143L106 148L88 148z" fill="#3a4038"/>
</g>
<text x="91" y="124.500" font-family="Liberation Sans,sans-serif" font-weight="bold" font-style="italic" font-size="13.500" fill="#f4f8ff" textLength="83" lengthAdjust="spacingAndGlyphs">READY FOR BATTLE</text>
<!-- vtuber -->
<use href="#vtu" transform="translate(211.5 90) scale(0.72)" color="#d9cece"/>
</svg><div class="abs dur">2:29:36</div></div>

<!-- ROW 2 -->
<div class="abs th" style="left:15px;top:509px" id="t7"><svg viewBox="0 0 263 148" preserveAspectRatio="none">
<defs><linearGradient id="pk7" x1="0" y1="0" x2="0.100" y2="1"><stop offset="0" stop-color="#c6b8ea"/><stop offset=".45" stop-color="#e3b2d4"/><stop offset="1" stop-color="#f89aae"/></linearGradient>
<linearGradient id="cb7" x1="0" y1="0" x2="0" y2="1"><stop offset="0" stop-color="#f9c4d2"/><stop offset="1" stop-color="#e6def6"/></linearGradient>
<g id="am7"><path d="M-5 5C-6 -2 -3 -6 1 -6C5 -6 6 -2 5 5L2 5L2 3L-2 3L-2 5z" fill="#d4202e"/><path d="M-2 -3C0 -5 5 -5 5 -2C5 0 0 0 -2 -1z" fill="#f4c8d0"/></g></defs>
<rect width="263" height="148" fill="url(#pk7)"/>
<!-- clouds -->
<path d="M138 26C136 20 142 16 148 18C150 10 162 8 166 16C172 14 174 22 172 26z" fill="#f7b2c4" stroke="#fdf0f4" stroke-width="1.400"/>
<path d="M204 30C202 24 208 20 214 22C216 14 228 10 234 18C240 14 250 18 250 24C256 24 256 30 254 31z" fill="#f7b2c4" stroke="#fdf0f4" stroke-width="1.400"/>
<path d="M78 20C80 16 86 15 90 18C94 14 104 16 106 20C110 20 112 23 110 24L80 23z" fill="#fbe6f0"/>
<!-- chat box -->
<rect x="23" y="19" width="79" height="108" rx="3" fill="url(#cb7)" stroke="#f7a8bc" stroke-width="1.600"/>
<g stroke-width="1.400" opacity=".9">
<path d="M43 26h12M45 30h10" stroke="#c04070"/><path d="M44 35h11M48 39h7M48 43h7" stroke="#50d070"/>
<path d="M43 47h12" stroke="#c04070"/><path d="M46 51h9" stroke="#3030b0"/>
<path d="M35 87h20" stroke="#2828a8"/><path d="M48 79h7" stroke="#a0c0e0"/>
</g>
<circle cx="40" cy="26" r="1.300" fill="#50a0d0"/><circle cx="40" cy="47" r="1.300" fill="#50a0d0"/><circle cx="32" cy="87" r="1.300" fill="#3030a0"/>
<g fill="#5a2a30" opacity=".85">
<path d="M72 52h3v3h-3zM80 50h3v3h-3zM85 50h3v3h-3zM64 58h3v3h-3zM69 58h3v3h-3zM58 62h3v3h-3zM63 62h3v3h-3zM88 62h3v3h-3zM93 62h3v3h-3zM82 66h3v3h-3zM87 66h3v3h-3zM76 70h3v3h-3zM81 70h3v3h-3zM64 74h3v3h-3zM69 74h3v3h-3z"/>
<path d="M66 78h3v3h-3zM71 78h3v3h-3zM76 78h3v3h-3zM81 78h3v3h-3zM86 78h3v3h-3zM91 78h3v3h-3zM76 86h3v3h-3zM81 86h3v3h-3zM86 86h3v3h-3zM68 90h3v3h-3zM73 90h3v3h-3zM62 94h3v3h-3zM67 94h3v3h-3zM57 98h3v3h-3zM62 98h3v3h-3zM88 98h3v3h-3zM93 98h3v3h-3zM80 102h3v3h-3zM85 102h3v3h-3zM74 106h3v3h-3zM79 106h3v3h-3zM66 110h3v3h-3zM71 110h3v3h-3z"/></g>
<g fill="#d03040" opacity=".8"><path d="M73 52.500h2v2h-2zM81 50.500h2v2h-2zM65 58.500h2v2h-2zM89 62.500h2v2h-2zM83 66.500h2v2h-2zM77 70.500h2v2h-2zM67 78.500h2v2h-2zM77 78.500h2v2h-2zM87 78.500h2v2h-2zM77 86.500h2v2h-2zM69 90.500h2v2h-2zM63 94.500h2v2h-2zM89 98.500h2v2h-2zM81 102.500h2v2h-2zM75 106.500h2v2h-2z"/></g>
<!-- orca + cloud -->
<path d="M12 128C10 122 16 119 22 121C26 116 36 116 40 121C48 119 56 120 60 124C68 122 74 128 72 132L30 133C22 134 14 132 12 128z" fill="#e6dcf2"/>
<path d="M14 114C16 108 24 108 30 110L32 106L36 110C40 112 44 116 46 120L40 118L42 124C34 124 22 122 14 114z" fill="#5d8b99"/>
<path d="M20 116C24 120 32 122 40 122L38 119C30 119 24 118 20 116z" fill="#f0f4f6"/>
<!-- vtuber -->
<use href="#vtu" transform="translate(181 13.500) scale(1.375)" color="#c8c0c1"/>
<path d="M131 120C134 132 132 142 128 148L236 148C230 140 228 130 231 120z" fill="#c8c0c1"/>
<!-- hoodie -->
<path d="M140 106C150 97 168 93 180 95C196 93 212 98 222 108L230 148L124 148C126 130 132 116 140 106z" fill="#a9a7a9"/>
<path d="M128 130C134 120 146 118 152 124L156 148L124 148z" fill="#9b999b"/>
<path d="M232 148L226 124C220 118 212 120 208 126L204 148z" fill="#9b999b"/>
<path d="M172 97L194 97L200 148L166 148z" fill="#efecee"/>
<path d="M150 100C156 94 166 94 172 98L162 110z" fill="#e6e2e4"/>
<path d="M214 100C208 94 200 94 194 98L204 110z" fill="#e6e2e4"/>
<path d="M176 100L172 120M192 100L192 118" stroke="#55555a" stroke-width="1.100"/>
<path d="M167 123L174 116L180 124L172 127zM187 121L194 116L200 124L192 125z" fill="#f4f2f2" stroke="#707074" stroke-width=".7"/>
<path d="M178 78L186 78L188 97L176 97z" fill="#f6e4dc"/>
<!-- side hair in front -->
<path d="M151 54C149 76 144 96 136 112L130 134L146 122C155 102 159 80 158 62z" fill="#cbc3c4"/>
<path d="M211 54C213 76 218 96 226 112L234 130L218 120C209 102 205 80 205 62z" fill="#cbc3c4"/>
<!-- emotes -->
<use href="#am7" transform="translate(69 26) scale(1.100)"/>
<use href="#am7" transform="translate(116 28) scale(.5)" opacity=".7"/>
<use href="#am7" transform="translate(123 39) scale(.75)" opacity=".8"/>
<use href="#am7" transform="translate(152 47) scale(.85)"/>
<use href="#am7" transform="translate(182 53) scale(.8)"/>
<use href="#am7" transform="translate(179 62) scale(.8)"/>
<use href="#am7" transform="translate(127 60) scale(.75)"/>
<use href="#am7" transform="translate(142 60) scale(.85)"/>
<use href="#am7" transform="translate(162 65) scale(.65)"/>
<use href="#am7" transform="translate(120 72) scale(.6)" opacity=".6"/>
<use href="#am7" transform="translate(230 50) scale(.9)"/>
<use href="#am7" transform="translate(238 57) scale(.65)"/>
<use href="#am7" transform="translate(104 89) scale(.8)"/>
<use href="#am7" transform="translate(130 87) scale(.95)"/>
<use href="#am7" transform="translate(143 93) scale(.65)"/>
<use href="#am7" transform="translate(171 84) scale(.7)"/>
<use href="#am7" transform="translate(172 93) scale(.85)"/>
<use href="#am7" transform="translate(159 97) scale(.9)"/>
<use href="#am7" transform="translate(127 98) scale(.8)"/>
<use href="#am7" transform="translate(136 102) scale(.9)"/>
<use href="#am7" transform="translate(232 102) scale(.6)" opacity=".5"/>
<use href="#am7" transform="translate(43 63) scale(1)"/>
<use href="#am7" transform="translate(63 49) scale(.9)" opacity=".45"/>
<use href="#am7" transform="translate(33 58) scale(.8)" opacity=".45"/>
<use href="#am7" transform="translate(62 79) scale(1)"/>
</svg><div class="abs dur">2:41:37</div></div>

<div class="abs th" style="left:282.500px;top:509px" id="t8"><svg viewBox="0 0 263 148" preserveAspectRatio="none">
<defs><linearGradient id="pk8" x1="0" y1="0" x2="0.150" y2="1"><stop offset="0" stop-color="#c9bcec"/><stop offset=".45" stop-color="#e2aed2"/><stop offset="1" stop-color="#f58ea4"/></linearGradient></defs>
<rect width="263" height="148" fill="url(#pk8)"/>
<rect width="130.600" height="148" fill="#f3f0ed"/>
<text x="19.800" y="61.300" font-family="Liberation Serif,serif" font-size="22.600" fill="#1c1c1c" stroke="#1c1c1c" stroke-width=".35" textLength="44.500" lengthAdjust="spacingAndGlyphs">THE</text>
<text x="19.800" y="88" font-family="Liberation Serif,serif" font-size="22.600" fill="#1c1c1c" stroke="#1c1c1c" stroke-width=".35" textLength="61.500" lengthAdjust="spacingAndGlyphs">ROOM</text>
<circle cx="83" cy="88.500" r=".7" fill="#333"/>
<path d="M80 100.500h2.500" stroke="#777" stroke-width=".8"/>
<path d="M85 105h8M94.500 105h3M99 105h9" stroke="#888" stroke-width=".8"/>
<!-- cloud -->
<path d="M196 32C194 26 200 23 206 25C208 18 218 16 222 22C226 12 240 12 242 20C248 16 256 20 254 30C256 32 254 34 252 34L216 34C214 38 204 38 200 36z" fill="#f6a9ba"/>
<path d="M206 25C208 18 218 16 222 22C226 12 240 12 242 20C248 16 256 20 254 27" fill="none" stroke="#fdf2f4" stroke-width="1.600"/>
<!-- hair back -->
<path d="M146 60C144 84 140 110 132 148L232 148C228 120 216 96 208 70z" fill="#c6bebf"/>
<use href="#vtu" transform="translate(177 53) rotate(-15) scale(1.3) translate(0 -30.500)" color="#c6bebf"/>
<!-- ear / bow -->
<path d="M140 26C138 18 146 14 152 18C158 12 168 14 170 20L162 26L150 30z" fill="#f8c0cc"/>
<path d="M140 26C138 18 146 14 152 18C156 20 158 24 156 28L146 30z" fill="#fdf6f6"/>
<path d="M158 12C162 8 168 10 168 14L164 18z" fill="#f8b8c4"/>
<ellipse cx="149" cy="36" rx="4.500" ry="8" fill="#f6f3f3" transform="rotate(20 149 36)"/>
<!-- hoodie -->
<path d="M150 98C160 90 176 88 186 90C200 88 216 92 224 102L232 148L136 148C138 128 142 110 150 98z" fill="#aba9ab"/>
<path d="M176 94L196 92L200 148L172 148z" fill="#f1eef0"/>
<path d="M152 96C160 88 172 88 178 92L168 104z" fill="#e9e5e7"/>
<path d="M218 96C212 88 204 86 196 90L206 102z" fill="#e9e5e7"/>
<path d="M180 98L178 116M196 98L198 114" stroke="#4c4c52" stroke-width="1.300"/>
<path d="M174 120L180 113L186 120L180 123zM194 116L199 111L205 117L199 120z" fill="#f6f4f4" stroke="#6c6c72" stroke-width=".7"/>
<path d="M138 120L160 112L170 148L134 148z" fill="#9a989a"/>
<path d="M168 86L174 92" stroke="#222" stroke-width="1.600"/>
<!-- neck -->
<path d="M174 76L190 72L196 92L176 94z" fill="#f6e4dc"/>
<!-- side hair -->
<path d="M156 58C154 76 150 92 142 106L136 130L150 116C158 98 160 80 160 66z" fill="#c9c1c2"/>
<path d="M198 54C200 72 206 88 216 100L226 116L212 108C204 92 198 76 196 62z" fill="#c9c1c2"/>
<path d="M146 96C142 110 140 126 142 140L150 120z" fill="#e8e4e6" opacity=".8"/>
</svg><div class="abs dur">2:51:36</div></div>

<div class="abs th" style="left:550px;top:509px" id="t9"><svg viewBox="0 0 263 148" preserveAspectRatio="none">
<defs><linearGradient id="bg9" x1="0" y1="0" x2="0" y2="1"><stop offset="0" stop-color="#d6d3d0"/><stop offset=".3" stop-color="#cbcbcd"/><stop offset=".5" stop-color="#bfc3ca"/><stop offset=".7" stop-color="#cfcfcf"/><stop offset="1" stop-color="#dddad7"/></linearGradient></defs>
<rect width="263" height="148" fill="url(#bg9)"/>
<ellipse cx="60" cy="66" rx="80" ry="12" fill="#b4bac4" opacity=".6"/>
<ellipse cx="210" cy="50" rx="60" ry="10" fill="#dcdad8" opacity=".6"/>
<ellipse cx="230" cy="84" rx="50" ry="8" fill="#b8bec8" opacity=".5"/>
<!-- chat names -->
<g stroke-width="2" >
<path d="M40 26h21M40 38.500h21M32 63h29M32 81.500h29M40 100h21" stroke="#4a8ad0"/>
<path d="M45 32h17M41 63h20M41 75.500h20M42 88h19" stroke="#2838b0"/>
<path d="M47 44.500h14M47 112.500h14" stroke="#3a78d8"/>
<path d="M32 69h29" stroke="#4a8ad0"/>
<path d="M45 106h16" stroke="#d83020"/>
<path d="M45 131h15" stroke="#f0a0b8"/>
</g>
<rect x="38" y="30" width="4" height="4" fill="#48a8e0"/><rect x="29" y="61" width="4" height="4" fill="#38b048"/><rect x="29" y="73.500" width="4" height="4" fill="#38b048"/>
<rect x="35" y="86.500" width="3" height="3" fill="#6a6a30"/><rect x="39" y="104.500" width="3" height="3" fill="#6a6a30"/>
<g stroke="#eef0f2" stroke-width="1.600" opacity=".75">
<path d="M63 22h12M63 32h48M63 44.500h46M63 51h50M63 57h26M63 63h32M63 69h10M63 75.500h22M63 81.500h44M63 88h46M63 94h50M63 100h11M63 106h48M63 112.500h50M63 119h52M63 125h6M63 131h20"/>
</g>
<!-- hair back -->
<use href="#vtu" transform="translate(177 10.700) scale(1.125)" color="#c9c1c2"/>
<!-- hoodie -->
<path d="M148 78C156 70 166 68 172 70L190 70C200 68 210 74 214 82C218 100 218 126 214 148L134 148C134 120 138 96 148 78z" fill="#a3a2a4"/>
<path d="M140 100C150 92 170 100 178 100C190 98 204 94 214 100C218 116 218 132 214 148L134 148C134 130 136 114 140 100z" fill="#949395"/>
<path d="M168 72L192 72L192 100L168 100z" fill="#f2f0f1"/>
<path d="M176 74L182 74L182 98L176 98z" fill="#a8a8ac"/>
<path d="M150 76C156 68 166 68 170 72L162 84z" fill="#efecee"/>
<path d="M210 78C204 68 196 68 190 72L198 84z" fill="#efecee"/>
<path d="M172 80L170 92M186 80L186 92" stroke="#55555a" stroke-width="1.200"/>
<path d="M166 96L171 91L176 97L170 99zM182 96L187 91L192 97L186 99z" fill="#f8f6f6" stroke="#6c6c72" stroke-width=".6"/>
<!-- white belly -->
<path d="M170 100C176 96 184 98 188 104C192 116 194 132 192 148L156 148C156 130 160 110 170 100z" fill="#f4f2f3"/>
<path d="M162 128C164 124 168 124 170 128L170 148L162 148zM182 128C184 124 188 124 190 128L190 148L182 148z" fill="#8f8e92"/>
<!-- neck -->
<path d="M171 60L183 60L185 72L170 72z" fill="#f6e6de"/>
<path d="M153 46C151 60 149 72 145 84L153 80C158 68 160 58 159 50z" fill="#cac2c3"/>
<path d="M201 46C203 60 205 72 209 84L201 80C196 68 194 58 195 50z" fill="#cac2c3"/>
</svg><div class="abs dur">2:12:11</div></div>

<div class="abs th" style="left:817.500px;top:509px" id="t10"><svg viewBox="0 0 263 148" preserveAspectRatio="none">
<rect width="263" height="148" fill="#2149a2"/>
<!-- logo -->
<text x="20" y="11.500" font-family="Liberation Sans,sans-serif" font-weight="bold" font-size="10.500" textLength="45" lengthAdjust="spacingAndGlyphs"><tspan fill="#e83838">s</tspan><tspan fill="#f08828">k</tspan><tspan fill="#f0d828">r</tspan><tspan fill="#38c838">i</tspan><tspan fill="#38c8e8">b</tspan><tspan fill="#3858e8">b</tspan><tspan fill="#9838e8">l</tspan><tspan fill="#e838b8">.</tspan><tspan fill="#f0f0f0">io</tspan><tspan fill="#f08828">!</tspan></text>
<path d="M206 8h4M222 8h8M206 12h20" stroke="#4878d8" stroke-width="1.500"/>
<!-- top bar -->
<rect x="16" y="15" width="231" height="8.400" fill="#f0f0f2"/>
<circle cx="20.500" cy="19" r="3.500" fill="#fff" stroke="#333" stroke-width="1"/>
<path d="M28 19.300h19" stroke="#333" stroke-width="1.500"/>
<path d="M138 21.500h18" stroke="#8090b0" stroke-width="1"/>
<path d="M214 19h10" stroke="#e8a040" stroke-width="1.200"/>
<!-- player list -->
<rect x="16" y="24" width="33.500" height="80" fill="#73c96b"/>
<rect x="16" y="48" width="33.500" height="16" fill="#f4f4f4"/>
<g stroke="#5ab052" stroke-width=".7"><path d="M16 32h33.500M16 40h33.500M16 72h33.500M16 80h33.500M16 88h33.500M16 96h33.500"/></g>
<path d="M16 48h33.500M16 56h33.500M16 64h33.500" stroke="#d0d0d0" stroke-width=".7"/>
<g stroke-width="1.300"><path d="M25 27h13M26 35h11M28 43h7M27 67h9M28 75h7M26 83h11M27 91h9M28 99h7" stroke="#2a4a90"/><path d="M27 51h9M26 59h11" stroke="#444"/>
<path d="M27 29.500h9M27 37.500h9M27 45.500h9M27 53.500h9M27 61.500h9M27 69.500h9M27 77.500h9M27 85.500h9M27 93.500h9M27 101.500h9" stroke="#3a5a3a" stroke-width=".9" opacity=".7"/></g>
<g stroke="#333" stroke-width="1.200"><path d="M18 28h3M18 36h3M18 44h3M18 52h3M18 60h3M18 68h3M18 76h3M18 84h3M18 92h3M18 100h3"/></g>
<g><circle cx="45.500" cy="28" r="3.200" fill="#c060c0"/><circle cx="45.500" cy="36" r="3.200" fill="#e848a8"/><circle cx="45.500" cy="44" r="3.200" fill="#8858c8"/><circle cx="45.500" cy="52" r="3.200" fill="#e8a838"/><circle cx="45.500" cy="60" r="3.200" fill="#484848"/><circle cx="45.500" cy="68" r="3.200" fill="#38c8d8"/><circle cx="45.500" cy="76" r="3.200" fill="#585858"/><circle cx="45.500" cy="84" r="3.200" fill="#e8c838"/><circle cx="45.500" cy="92" r="3.200" fill="#c83838"/><circle cx="45.500" cy="100" r="3.200" fill="#686868"/></g>
<path d="M38 50l3 5" stroke="#333" stroke-width="1.600"/>
<!-- canvas -->
<rect x="50.500" y="24" width="138.500" height="104" fill="#ffdd00"/>
<rect x="50.500" y="56.400" width="29.500" height="7" fill="#c2cada"/>
<path d="M174 27l2 -2l1 3l2 0l0 4l-6 0z" fill="#58c838"/><path d="M182 26l6 0l0 4l-2 0l-1 3l-2 -2z" fill="#f09020"/>
<!-- drawing -->
<path d="M108 103C104 118 98 122 93 128" fill="none" stroke="#111" stroke-width="1.800"/>
<path d="M113 50C108 62 100 82 104 96C108 104 122 104 134 98C144 92 148 84 150 70L152 56L132 50z" fill="#fff" stroke="#111" stroke-width="1.800"/>
<path d="M110 36C114 28 160 26 170 34C174 42 170 52 160 56C146 54 126 50 114 48C108 46 108 40 110 36z" fill="#a9512a" stroke="#111" stroke-width="1.800"/>
<path d="M106 50L112 58M107 56L112 60" stroke="#111" stroke-width="1.200"/>
<path d="M114 58C120 56 124 62 126 64L140 68M140 68C144 66 150 68 148 72C146 76 140 74 140 68z" fill="none" stroke="#111" stroke-width="1.500"/>
<circle cx="118.500" cy="63" r="1.500" fill="#111"/>
<path d="M117 67l4 0l-1 4l-3 -1z" fill="#f0a020"/>
<path d="M112 70C112 78 120 82 124 76" fill="none" stroke="#111" stroke-width="1.500"/>
<path d="M150 70L152 84" stroke="#111" stroke-width="1.500"/>
<!-- chat -->
<rect x="191" y="24" width="56" height="104" fill="#f6f8f8"/>
<g fill="#d4f0d0"><rect x="191" y="40" width="56" height="4"/><rect x="191" y="62" width="56" height="4"/><rect x="191" y="74" width="56" height="16"/></g>
<g stroke-width="1.200">
<path d="M192 26h18M192 30h20M192 34h14M192 38h8M192 46h12M192 50h16M192 54h10M192 58h12M192 68h10M192 98h12M192 102h8M192 106h10M192 110h12M192 114h8" stroke="#333"/>
<path d="M192 42h20M192 64h22M192 76h24M192 80h28M192 84h26M192 88h30M192 94h22" stroke="#58b848"/>
<path d="M214 26h10M212 34h10M212 46h10M214 54h10M212 58h10M214 68h8M214 76h8" stroke="#2838a0"/>
<path d="M214 30h8M212 38h10M212 50h8M216 72h8" stroke="#d84060"/>
<path d="M226 30h10M226 42h14M226 50h8M226 58h12M226 64h14" stroke="#a0a8b0"/>
<path d="M192 120h14M192 124h10" stroke="#555"/>
</g>
<!-- widget -->
<rect x="4" y="123" width="41.500" height="16.500" fill="#6ecbcb"/>
<rect x="4" y="123" width="41.500" height="16.500" fill="none" stroke="#a8e4e0" stroke-width="1"/>
<rect x="12" y="131" width="16" height="5" rx="1" fill="#f8f8f8"/><rect x="16" y="132" width="8" height="3" fill="#f8a8c0"/>
<circle cx="7" cy="127" r="2" fill="#f8a0b0"/>
<path d="M34 134C34 129 42 129 42 134L42 139L34 139z" fill="#c8c0c0"/>
<rect x="45.500" y="123" width="3.500" height="5" fill="#f0a038"/>
<rect x="4" y="141.500" width="76" height="5" fill="#f6b9c9"/>
<!-- vtuber -->
<use href="#vtu" transform="translate(234 81.5) scale(0.8)" color="#d3cacb"/>
</svg><div class="abs dur">2:30:31</div></div>

<div class="abs th" style="left:1085px;top:509px" id="t11"><svg viewBox="0 0 263 148" preserveAspectRatio="none">
<rect width="263" height="148" fill="#9d9d9d"/>
<rect width="263" height="3.500" fill="#d2d2d2"/>
<rect y="3.500" width="263" height="8.500" fill="#bcbcbc"/>
<rect x="114" y="5" width="12" height="5.500" fill="#90b0e0"/>
<path d="M24 7.500h2M30 7.500h2M38 7.500h2M43 7.500h2M49 7.500h2M58 7.500h2M72 7.500h2M84 7.500h3M90 7.500h2M130 7.500h2M136 7.500h2" stroke="#6a6a6a" stroke-width="2"/>
<path d="M2 1.800h4M10 1.800h6M20 1.800h6M30 1.800h4M38 1.800h4M46 1.800h4M54 1.800h6M64 1.800h4M106 1.800h50" stroke="#9a9a9a" stroke-width="1"/>
<rect x="0" y="12" width="21" height="136" fill="#c6c6c6"/>
<rect x="21" y="142.500" width="200" height="5.500" fill="#b8b8b8"/>
<rect x="79" y="12" width="8" height="2.500" fill="#90b0e0"/>
<!-- color wheel -->
<circle cx="10.300" cy="29.300" r="8.800" fill="none" stroke="#40c040" stroke-width="2.400"/>
<path d="M10.300 20.500A8.800 8.800 0 0 1 19.100 29.300" fill="none" stroke="#e8d020" stroke-width="2.400"/>
<path d="M19.100 29.300A8.800 8.800 0 0 1 10.300 38.100" fill="none" stroke="#3060e0" stroke-width="2.400"/>
<path d="M10.300 38.100A8.800 8.800 0 0 1 1.500 29.300" fill="none" stroke="#a040e0" stroke-width="2.400"/>
<path d="M1.500 29.300A8.800 8.800 0 0 1 6 21.600" fill="none" stroke="#e04060" stroke-width="2.400"/>
<rect x="4" y="23" width="12.500" height="12.500" fill="#7a4028"/><path d="M4 23L16.500 23L16.500 35.500z" fill="#d06030"/><path d="M4 23L4 35.500L16.500 35.500z" fill="#2a1810"/>
<rect x="1" y="46" width="19" height="16" fill="#d8c8b8"/><path d="M1 50h19M1 54h19M1 58h19M6 46v16M11 46v16M16 46v16" stroke="#a89888" stroke-width=".6"/>
<rect x="3" y="60" width="15" height="3" fill="#4a4a4a"/>
<path d="M2 70h3M8 70h3M14 70h3M2 75h3M8 75h3M14 75h3M2 80h3M8 80h3M14 80h3" stroke="#555" stroke-width="2"/>
<rect x="2" y="84" width="17" height="4" fill="#8ab0d8"/><rect x="5" y="84" width="5" height="5" fill="#f4f4f4"/><rect x="5" y="90" width="5" height="4" fill="#fff"/>
<!-- ref panel 1 -->
<rect x="22" y="14" width="54" height="63" fill="#bfb3d6"/>
<rect x="22" y="14" width="18" height="27" fill="#cdbfe0"/>
<path d="M27 26C27 22 33 22 33 26L34 40L26 40z" fill="#f0b0a8"/><path d="M27 32L33 32L34 40L26 40z" fill="#a09898"/>
<path d="M46 24C44 16 52 13 58 16C64 14 68 20 66 28L62 34L50 34z" fill="#f4b8b0"/>
<path d="M50 26C52 22 60 22 62 26L60 34L52 34z" fill="#f8e0c0"/>
<path d="M48 34L64 34L68 50L66 77L50 77L50 50z" fill="#9a9498"/>
<path d="M60 50L70 77L56 77z" fill="#f4d4b0"/>
<rect x="72" y="20" width="4" height="42" fill="#e8e0d0"/><path d="M72 24h4M72 30h4M72 36h4M72 44h4M72 54h4" stroke-width="3" stroke="#d84050"/><path d="M72 29h4M72 50h4M72 57h4" stroke-width="2.500" stroke="#222"/><path d="M72 35h4" stroke-width="2" stroke="#4040a0"/><path d="M72 40h4" stroke-width="2" stroke="#f0d8a0"/>
<rect x="22" y="40.500" width="32.500" height="35.500" fill="#5a91a1"/>
<path d="M24 56C22 48 30 44 36 46C44 44 48 52 46 60L42 66L28 66z" fill="#f3a496"/>
<path d="M28 56C30 52 40 52 42 58L40 64L30 64z" fill="#f8dcc8"/>
<circle cx="38" cy="57" r="1.600" fill="#48a0d8"/>
<path d="M22 70C26 64 42 64 46 70L46 76L22 76z" fill="#b01828"/>
<path d="M30 64L38 64L40 72L30 72z" fill="#2a2024"/>
<!-- ref panel 2 -->
<rect x="22" y="82" width="54" height="62.500" fill="#efefef"/>
<path d="M34 100C34 88 46 82 54 86C62 86 66 94 64 104C68 116 70 130 66 144L30 144C28 132 30 118 36 110z" fill="#bbb3b4"/>
<path d="M38 100C40 94 52 94 56 100L56 110C52 114 42 114 38 110z" fill="#f6ece6"/>
<path d="M34 98C38 88 56 88 60 98L56 102C52 96 44 96 38 104z" fill="#b5adae"/>
<ellipse cx="43" cy="103" rx="2.200" ry="3" fill="#3a3040"/><ellipse cx="53" cy="103" rx="2.200" ry="3" fill="#3a3040"/>
<ellipse cx="59" cy="90" rx="3" ry="2" fill="#f4f2f2"/>
<path d="M44 114L58 112L62 144L44 144z" fill="#a29c9e"/>
<path d="M28 118C32 112 38 112 40 116L36 144L28 144z" fill="#c4bcbd"/>
<!-- canvas -->
<rect x="93" y="28.700" width="102" height="102" fill="#fff"/>
<g fill="none" stroke="#e6dedb" stroke-width="3.600" stroke-linecap="round" stroke-linejoin="round">
<path d="M104 50C102 42 116 38 130 40C146 36 162 42 158 54C152 68 120 64 108 60C100 56 102 52 104 50z"/>
<path d="M120 48C112 60 106 78 108 92C116 100 124 92 128 84C134 72 140 60 144 52"/>
<path d="M128 56C132 62 126 70 132 72C138 74 140 68 138 64"/>
<path d="M144 60C160 66 170 84 164 100C156 112 136 112 122 104C108 96 104 84 110 72"/>
<path d="M116 96C122 112 134 126 146 126C158 126 170 116 166 104C160 96 144 98 136 100"/>
<path d="M138 76C146 80 150 88 146 96C142 100 136 98 134 94"/>
</g>
<circle cx="135.500" cy="105" r="1.300" fill="none" stroke="#888" stroke-width=".5"/>
<!-- right panel -->
<rect x="221.600" y="12" width="41.400" height="136" fill="#b6b6b6"/>
<rect x="230.500" y="14" width="27.500" height="26.500" fill="#fbfbfb"/>
<path d="M233 20h16M233 27h8M233 34h20" stroke="#d8d8d8" stroke-width="1"/>
<rect x="222" y="42" width="41" height="16" fill="#a8a8a8"/>
<path d="M224 45h36M224 49h36M224 53h36" stroke="#8a8a8a" stroke-width="1.500"/>
<path d="M246 56l4 -8" stroke="#e05050" stroke-width="1"/>
<rect x="226" y="60" width="37" height="30" fill="#c2c2c2"/>
<rect x="226" y="62" width="37" height="5" fill="#a8c4e4"/>
<g fill="none" stroke="#2e2e32" stroke-linecap="round"><path d="M230 65C234 62 238 67 243 64" stroke-width="1.800"/><path d="M230 71C234 68 238 73 243 70" stroke-width="2.200"/><path d="M230 77C234 74 238 79 243 76" stroke-width="2.600"/><path d="M230 83C234 80 238 85 243 82" stroke-width="2.200"/><path d="M230 88C234 86 238 90 243 88" stroke-width="1.500"/></g>
<path d="M246 66h14M248 72h12M246 78h14M250 84h10" stroke="#8a8a8a" stroke-width="1.200"/>
<path d="M224 96h36M224 102h36M224 108h36" stroke="#a4a4a4" stroke-width="1.500"/>
<!-- chat lines -->
<g stroke-width="1.500"><path d="M204 16h17M206 27h15M208 35h13M206 42h15M208 49h13M210 53h11" stroke="#3868c8"/><path d="M205 20h16M207 31h14M209 38h12M210 46h11M206 75h15" stroke="#389858"/><path d="M212 57h9M208 64h13" stroke="#d84848"/><path d="M210 61h11" stroke="#38b878"/><path d="M208 68.500h13" stroke="#b858c8"/></g>
<circle cx="203" cy="68.500" r="1.500" fill="#48c048"/>
<!-- widget -->
<rect x="2" y="128.600" width="41.500" height="18" fill="#63c6c8"/>
<rect x="2" y="128.600" width="41.500" height="18" fill="none" stroke="#b0e8e4" stroke-width="1"/>
<path d="M4 134h36M4 143h36" stroke="#8adcd8" stroke-width="1"/>
<rect x="10" y="137" width="18" height="5.500" rx="1.500" fill="#f8f8f8"/><rect x="15" y="138.200" width="8" height="3" fill="#f8a8c0"/>
<circle cx="5" cy="132" r="1.800" fill="#f8a0b0"/>
<path d="M32 141C32 135 41 135 41 141L41 146L32 146z" fill="#c8c0c0"/>
<!-- vtuber -->
<use href="#vtu" transform="translate(225.6 85.7) scale(0.76)" color="#c4bbbc"/>
</svg><div class="abs dur">3:51:50</div></div>

<div class="abs th" style="left:1352.500px;top:509px" id="t12"><svg viewBox="0 0 263 148" preserveAspectRatio="none">
<rect width="263" height="148" fill="#a4a4a4"/>
<rect width="263" height="3.500" fill="#d2d2d2"/>
<rect y="3.500" width="263" height="8.500" fill="#bababa"/>
<rect x="114" y="5" width="12" height="5.500" fill="#90b0e0"/>
<path d="M24 7.500h2M30 7.500h2M38 7.500h2M43 7.500h2M54 7.500h2M78 7.500h2M84 7.500h3M130 7.500h2M136 7.500h2" stroke="#6a6a6a" stroke-width="2"/>
<path d="M2 1.800h4M10 1.800h6M20 1.800h6M30 1.800h4M38 1.800h4M46 1.800h4M54 1.800h6M64 1.800h4M106 1.800h50" stroke="#9a9a9a" stroke-width="1"/>
<rect x="0" y="12" width="22.500" height="136" fill="#c6c6c6"/>
<!-- wheel -->
<circle cx="11.500" cy="29.700" r="8.800" fill="none" stroke="#40c040" stroke-width="2.400"/>
<path d="M11.500 20.900A8.800 8.800 0 0 1 20.300 29.700" fill="none" stroke="#e8d020" stroke-width="2.400"/>
<path d="M20.300 29.700A8.800 8.800 0 0 1 11.500 38.500" fill="none" stroke="#3060e0" stroke-width="2.400"/>
<path d="M11.500 38.500A8.800 8.800 0 0 1 2.700 29.700" fill="none" stroke="#a040e0" stroke-width="2.400"/>
<path d="M2.700 29.700A8.800 8.800 0 0 1 7 22" fill="none" stroke="#e04060" stroke-width="2.400"/>
<rect x="5" y="23.500" width="12.500" height="12.500" fill="#a02030"/><path d="M5 23.500L17.500 23.500L17.500 36z" fill="#e03848"/><path d="M5 23.500L5 36L17.500 36z" fill="#301018"/>
<ellipse cx="9" cy="27" rx="3" ry="1.800" fill="#f8c8c8"/>
<rect x="1" y="50" width="20" height="16" fill="#d8d0c8"/><rect x="1" y="53" width="4" height="4" fill="#222"/><rect x="10" y="56" width="6" height="3" fill="#2a3a70"/><rect x="16" y="56" width="5" height="4" fill="#e85070"/><rect x="4" y="60" width="6" height="4" fill="#f0c8a0"/><rect x="1" y="57" width="4" height="3" fill="#f8f8f8"/>
<path d="M2 72h3M8 72h3M14 72h3M2 77h3M8 77h3M14 77h3M2 81h3M8 81h3M14 81h3" stroke="#555" stroke-width="2"/>
<rect x="5" y="84" width="14" height="3.500" fill="#8ab0d8"/><rect x="5" y="84" width="6" height="3" fill="#f4f4f4"/>
<path d="M6 90h12M6 94h12M6 98h12" stroke="#909090" stroke-width="1.200"/>
<rect x="6" y="101" width="9" height="3" fill="#a8d8f0"/>
<!-- canvas -->
<rect x="22.800" y="15" width="174.200" height="129.500" fill="#7fe9f0"/>
<rect x="22.800" y="114" width="174.200" height="30.500" fill="#d6f8fb"/>
<rect x="197" y="15" width="9" height="129.500" fill="#fdfdfd"/>
<g fill="#d2f6fa"><rect x="24" y="26" width="33" height="12"/><rect x="24" y="43" width="33" height="12"/><rect x="24" y="59" width="33" height="12"/><rect x="24" y="75" width="33" height="12"/><rect x="24" y="92" width="33" height="12"/><rect x="24" y="108" width="33" height="12" fill="#e6fbfd"/><rect x="24" y="124" width="33" height="12" fill="#eefcfe"/></g>
<path d="M24 16l2 3M26 16l-2 3" stroke="#fff" stroke-width=".8"/>
<path d="M180 30L186 42L197 44L197 62L190 68L176 62L164 66L166 52L158 42L172 40z" fill="#43cbe2"/>
<path d="M188 81L191 87L197 88L193 93L194 99L188 96L182 99L183 93L179 88L185 87z" fill="#e8fbfd"/>
<path d="M183 86l10 8M181 90l10 8M186 83l9 7" stroke="#7fe9f0" stroke-width="1"/>
<path d="M186 120v14" stroke="#5ad0e0" stroke-width=".6"/><path d="M186 124l3 3M189 124l-3 3M186 131l3 3M189 131l-3 3" stroke="#43cbe2" stroke-width=".9"/>
<!-- chibi hair back -->
<path d="M90 50C92 32 110 24 128 26C150 24 164 38 166 58C168 76 174 92 176 104C172 114 164 116 160 108C158 100 154 94 150 92L100 92C96 100 94 110 88 116C80 114 76 104 80 94C88 84 88 66 90 50z" fill="#b9b1ab"/>
<path d="M90 50C92 32 110 24 128 26C150 24 164 38 166 58" fill="none" stroke="#55504e" stroke-width=".9"/>
<path d="M80 94C76 98 78 108 84 112M176 104C178 98 172 92 168 92" fill="none" stroke="#8a827e" stroke-width=".8"/>
<!-- ahoge -->
<path d="M124 26C120 20 112 20 108 22C112 16 122 16 126 24C130 16 138 14 140 20C134 18 130 22 128 27z" fill="#b9b1ab" stroke="#77706c" stroke-width=".7"/>
<!-- tail and legs -->
<path d="M134 110C140 104 150 106 154 112C150 118 142 118 138 124L134 120z" fill="#aaa29e"/>
<path d="M114 106L122 106L122 126L114 126z" fill="#fbeee6"/><path d="M126 106L134 106L136 122L128 124z" fill="#fbeee6"/>
<path d="M113 118L122 118L122 130L112 132z" fill="#6f6a6c"/><path d="M127 116L136 114L138 124L130 127z" fill="#6f6a6c"/>
<path d="M112 130L122 129L122 133L112 134z" fill="#f4b8b8"/>
<!-- jacket -->
<path d="M100 92C106 86 118 88 124 92C132 88 146 88 152 94C156 100 152 106 144 106L134 104L134 110L112 110L112 104L104 106C96 104 94 98 100 92z" fill="#6b686a"/>
<path d="M118 90L130 90L128 104L120 104z" fill="#eef0f2"/>
<path d="M112 104L134 104L136 110L110 110z" fill="#8a8688"/>
<!-- face -->
<path d="M99 66C101 56 148 56 151 68C152 78 144 88 126 90C108 90 98 80 99 66z" fill="#fcf0e8"/>
<!-- bangs -->
<path d="M94 52C100 36 152 36 158 54C160 62 158 70 154 76C152 66 146 60 138 58C140 62 140 66 138 68C132 62 124 60 116 62C108 64 102 70 98 80C92 72 92 60 94 52z" fill="#bdb5af"/>
<!-- eyes -->
<ellipse cx="108" cy="70" rx="6.500" ry="7.500" fill="#5a4a4a"/><ellipse cx="108" cy="71" rx="5" ry="6" fill="#8a6a5a"/><ellipse cx="108" cy="75" rx="4" ry="2.500" fill="#58a8d0"/><circle cx="106" cy="67" r="1.500" fill="#fff"/>
<ellipse cx="140.500" cy="70" rx="6.500" ry="7.500" fill="#4a4858"/><ellipse cx="140.500" cy="71" rx="5" ry="6" fill="#6a7a90"/><ellipse cx="140.500" cy="75" rx="4" ry="2.500" fill="#58a8d0"/><circle cx="138.500" cy="67" r="1.500" fill="#fff"/>
<path d="M100 66C102 60 112 60 116 64M132 64C136 60 146 60 148 66" fill="none" stroke="#2a2430" stroke-width="1.400"/>
<ellipse cx="103" cy="80" rx="4" ry="2" fill="#f8c4c0" opacity=".8"/><ellipse cx="146" cy="80" rx="4" ry="2" fill="#f8c4c0" opacity=".8"/>
<ellipse cx="125" cy="80" rx="1.300" ry="1.600" fill="#d06878"/>
<!-- ears -->
<path d="M86 42C90 36 100 38 102 44C98 50 90 52 86 48z" fill="#f6f4f2" stroke="#a8a09c" stroke-width=".6"/>
<path d="M146 38C152 34 160 38 160 46C156 50 150 48 146 44z" fill="#f6f4f2" stroke="#a8a09c" stroke-width=".6"/>
<!-- circles deco -->
<g fill="none" stroke="#eefcfe" stroke-width="1.600"><circle cx="88" cy="34" r="4"/><circle cx="165" cy="68" r="4"/><circle cx="86" cy="98" r="3.500"/><circle cx="172" cy="96" r="3.500"/><circle cx="157" cy="77" r="2.500"/></g>
<path d="M84 30l8 8M86 28l8 8" stroke="#eefcfe" stroke-width=".8"/>
<!-- right panel -->
<rect x="206" y="6" width="57" height="142" fill="#b2b2b2"/>
<rect x="206" y="15" width="14" height="80" fill="#a0a0a0"/>
<path d="M206 24h14M206 46h14" stroke="#7848c8" stroke-width="1.500"/><path d="M208 31h12M208 36h12M208 52h12M206 72h14" stroke="#c06080" stroke-width="1"/><path d="M208 13h6" stroke="#40c8e0" stroke-width="1.500"/>
<rect x="227.600" y="18" width="34.400" height="18.600" fill="#7fe9f0"/><rect x="227.600" y="30" width="34.400" height="6.600" fill="#d6f8fb"/>
<path d="M247 24C247 20 255 20 255 24L256 30L246 30z" fill="#b9b1ab"/><rect x="249" y="24" width="4" height="4" fill="#fcf0e8"/>
<rect x="227.600" y="18" width="34.400" height="18.600" fill="none" stroke="#d05050" stroke-width=".6"/>
<rect x="222" y="14" width="41" height="2.500" fill="#d8b0b0"/>
<path d="M222 42h40M222 47h40M222 52h40" stroke="#8c8c8c" stroke-width="1.500"/>
<rect x="226" y="58" width="37" height="40" fill="#c0c0c0"/><rect x="230" y="61" width="33" height="4" fill="#a8c4e4"/>
<g stroke="#2a2a2e" stroke-width="1.800" stroke-linecap="round"><path d="M222 24h3M222 34h3M222 44h3M222 52h3M222 58h4M222 64h4M222 74h4"/></g>
<path d="M236 68h24M240 73h20M238 78h22M242 83h18M240 88h20M244 93h16" stroke="#8a8a8a" stroke-width="1.200"/>
<path d="M250 103l10 -2M246 112h12" stroke="#333" stroke-width="1.200"/>
<!-- vtuber -->
<use href="#vtu" transform="translate(224.6 75.5) scale(1.11)" color="#c2b9ba"/>
</svg><div class="abs dur">5:52:20</div></div>

<!-- video text -->
<div class="abs vt" style="left:15px;top:418px"><span style="letter-spacing:0.437px">【Vtuber】im in the mine!!</span></div>
<div class="abs vm" style="left:15px;top:450px;letter-spacing:0.061px">1.6K views <span class="bl">•</span> 1 month ago</div>
<div class="abs vt" style="left:282.5px;top:418px"><span style="letter-spacing:0.477px">【Vtuber】wowza im tired</span></div>
<div class="abs vm" style="left:282.5px;top:450px;letter-spacing:0.097px">563 views <span class="bl">•</span> 1 month ago</div>
<div class="abs vt" style="left:550px;top:418px"><span style="letter-spacing:0.433px">【Vtuber】nihongo plz !</span><br><span style="letter-spacing:0.697px">discord</span></div>
<div class="abs vm" style="left:550px;top:470px;letter-spacing:0.105px">952 views <span class="bl">•</span> 2 months ago</div>
<div class="abs vt" style="left:817.5px;top:418px"><span style="letter-spacing:0.452px">【Vtuber】tipsy and</span><br><span style="letter-spacing:0.485px">bathroom breaks</span></div>
<div class="abs vm" style="left:817.5px;top:470px;letter-spacing:0.114px">888 views <span class="bl">•</span> 2 months ago</div>
<div class="abs vt" style="left:1085px;top:418px"><span style="letter-spacing:0.43px">【Vtuber】Working on</span><br><span style="letter-spacing:-0.093px">EXPRESSIONS - Join the !</span><span class="el">…</span></div>
<div class="abs vm" style="left:1085px;top:470px;letter-spacing:0.079px">3.2K views <span class="bl">•</span> 3 months ago</div>
<div class="abs vt" style="left:1352.5px;top:418px"><span style="letter-spacing:0.343px">【Vtuber】Overwatch With</span><br><span style="letter-spacing:0.405px">the Bros !discord</span></div>
<div class="abs vm" style="left:1352.5px;top:470px;letter-spacing:0.122px">967 views <span class="bl">•</span> 3 months ago</div>
<div class="abs vt" style="left:15px;top:667px"><span style="letter-spacing:0.449px">【Vtuber】Phasmophobia</span><br><span style="letter-spacing:0.265px">Collab ! Ft. Mako, Plant, an</span><span class="el">…</span></div>
<div class="abs vm" style="left:15px;top:719px;letter-spacing:0.091px">2.3K views <span class="bl">•</span> 3 months ago</div>
<div class="abs vt" style="left:282.5px;top:667px"><span style="letter-spacing:0.37px">【Vtuber】First ASMR</span><br><span style="letter-spacing:0.173px">Stream!! Reading THE</span><span class="el">…</span></div>
<div class="abs vm" style="left:282.5px;top:719px;letter-spacing:0.095px">2.3K views <span class="bl">•</span> 3 months ago</div>
<div class="abs vt" style="left:550px;top:667px"><span style="letter-spacing:0.306px">【Vtuber】Scuffed APEX +</span><br><span style="letter-spacing:0.349px">CHAT ft. Glaciel_Frost</span><span class="el">…</span></div>
<div class="abs vm" style="left:550px;top:719px;letter-spacing:0.091px">1.9K views <span class="bl">•</span> 4 months ago</div>
<div class="abs vt" style="left:817.5px;top:667px"><span style="letter-spacing:0.529px">【Vtuber】scribbl.io w</span><br><span style="letter-spacing:0.229px">viewers !! yay</span></div>
<div class="abs vm" style="left:817.5px;top:719px;letter-spacing:0.083px">1.2K views <span class="bl">•</span> 4 months ago</div>
<div class="abs vt" style="left:1085px;top:667px"><span style="letter-spacing:0.464px">【Vtuber】i work on things</span><br><span style="letter-spacing:0.402px">like a good boi</span></div>
<div class="abs vm" style="left:1085px;top:719px;letter-spacing:0.079px">1.4K views <span class="bl">•</span> 4 months ago</div>
<div class="abs vt" style="left:1352.5px;top:667px"><span style="letter-spacing:0.346px">【Vtuber】can i draw please</span></div>
<div class="abs vm" style="left:1352.5px;top:699px;letter-spacing:0.083px">2.9K views <span class="bl">•</span> 4 months ago</div>
<!-- nav arrows -->
<div class="abs nav" style="left:1590px;top:309px"><svg width="50" height="50" viewBox="0 0 50 50"><path d="M21.500 18L28.500 25L21.500 32" fill="none" stroke="#aaa" stroke-width="2.600"/></svg></div>
<div class="abs nav" style="left:-10px;top:558px"><svg width="50" height="50" viewBox="0 0 50 50"><path d="M28.500 18L21.500 25L28.500 32" fill="none" stroke="#aaa" stroke-width="2.600"/></svg></div>
</body>
</html>
